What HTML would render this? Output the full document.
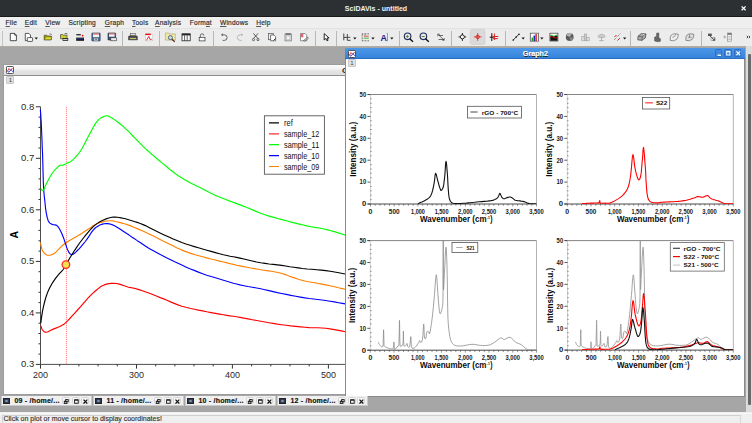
<!DOCTYPE html>
<html><head><meta charset="utf-8">
<style>
*{margin:0;padding:0;box-sizing:border-box}
html,body{width:752px;height:423px;overflow:hidden;background:#efefef;font-family:"Liberation Sans",sans-serif;position:relative}
.a{position:absolute}
#title{left:0;top:0;width:752px;height:17px;background:#2d3033;border-bottom:1px solid #17191b}
#title .t{left:0;width:752px;top:3.6px;text-align:center;color:#f2f2f2;font-weight:bold;font-size:8px;transform:scaleX(0.88);transform-origin:375.9px 0}
#menu{left:0;top:17px;width:752px;height:11px;background:#efefef}
.mi{top:2.2px;font-size:6.6px;color:#2a2a2a;letter-spacing:0.2px;-webkit-text-stroke:0.15px #2a2a2a}
.mi u{text-decoration:underline;text-underline-offset:1.2px;text-decoration-thickness:0.7px;text-decoration-color:#555}
#tb{left:0;top:28px;width:752px;height:18px;background:#ececec;border-top:1px solid #e2e2e2}
.sep{top:2px;width:1px;height:15px;background:#b8b8b8}
#mdi{left:0;top:46px;width:746px;height:366px;background:#a6a6a6;border-top:1px solid #b2aca6}
#sb{left:746px;top:46px;width:6px;height:366px;background:#dcdcdc}
#sbh{left:748px;top:54px;width:2.6px;height:351px;background:#6a6a6a;border-radius:1px}
#lw{left:3.3px;top:63.8px;width:720px;height:331px;background:#fff;border:1px solid #9c9c9c}
#lwt{left:0;top:0;width:100%;height:11.2px;background:linear-gradient(#fbfbfb 0%,#f3f3f3 40%,#e3e3e3 60%,#dfdfdf 100%);border-bottom:1px solid #8e8e8e}
#g2{left:345px;top:48px;width:400px;height:349px;background:#fff;border:1px solid #8a8a8a;border-top:none}
#g2t{left:-1px;top:0;width:400px;height:10.8px;background:linear-gradient(#4d97e8,#3584dc);border-bottom:1px solid #2a6cc0;border-radius:2px 2px 0 0}
.wb{top:1.4px;width:7.6px;height:8px;border:1px solid #2d6cc0;border-radius:1.5px;background:#3f8ae0}
#tabs{left:0;top:395.8px;width:752px;height:10px}
.tab{top:0;height:9.8px;width:91px;background:#f0f0f0;border:1px solid #c9c9c9;border-top:none}
.tab .ic{left:1.3px;top:2px;width:6.8px;height:6px;background:radial-gradient(#9aa 10%,#2c3a55 60%);border:0.5px solid #222}
.tab .tx{left:12.5px;top:1.4px;font-size:7px;font-weight:bold;color:#111;white-space:nowrap;letter-spacing:0.2px;-webkit-text-stroke:0.15px #111}
.tab .bt{top:1.1px;width:7.7px;height:7.4px;border:0.8px solid #d4d4d4;border-radius:1.5px;background:#f8f8f8}
#status{left:0;top:412.5px;width:752px;height:10.5px;background:#efefef;border-top:1px solid #f8f8f8}
#stl{left:1.5px;top:1px;width:739px;height:9.5px;border:1px solid #d0d0d0;border-bottom:none;border-right:1px solid #d8d8d8}
#stl .tx{left:1px;top:-1px;font-size:7px;color:#2e2e2e;white-space:nowrap;letter-spacing:0px;-webkit-text-stroke:0.12px #2e2e2e}
svg text{font-family:"Liberation Sans",sans-serif}
.lt{font-size:9.6px;fill:#2a2a2a}
.ax{font-size:10.5px;font-weight:bold;fill:#000}
.lg1{font-size:8.6px;fill:#111}
.tk{font-size:6.4px;fill:#1a1a1a;font-weight:bold}
.al{font-size:8.2px;font-weight:bold;fill:#0a0a0a}
.lg{font-size:6.2px;font-weight:bold;fill:#111}
</style></head><body>
<div id="title" class="a"><div class="t a">SciDAVis - untitled</div>
<svg class="a" style="left:738px;top:3px" width="12" height="12"><path d="M3.6,3.4 l4,3.9 M7.6,3.4 l-4,3.9" stroke="#fff" stroke-width="1.3"/></svg></div>
<div id="menu" class="a">
<div class="a mi" style="left:5.6px"><u>F</u>ile</div>
<div class="a mi" style="left:24.8px"><u>E</u>dit</div>
<div class="a mi" style="left:45.3px"><u>V</u>iew</div>
<div class="a mi" style="left:68.5px">Scripting</div>
<div class="a mi" style="left:104.8px"><u>G</u>raph</div>
<div class="a mi" style="left:132px"><u>T</u>ools</div>
<div class="a mi" style="left:155.1px"><u>A</u>nalysis</div>
<div class="a mi" style="left:189.8px">Form<u>a</u>t</div>
<div class="a mi" style="left:220px"><u>W</u>indows</div>
<div class="a mi" style="left:256.2px"><u>H</u>elp</div>
</div>
<div id="tb" class="a">
<div class="a" style="left:2.2px;top:1.5px;width:1px;height:16px;background:#c4c4c4"></div>
<div class="a sep" style="left:121.8px"></div>
<div class="a sep" style="left:159.0px"></div>
<div class="a sep" style="left:213.1px"></div>
<div class="a sep" style="left:315.1px"></div>
<div class="a sep" style="left:335.9px"></div>
<div class="a sep" style="left:398.5px"></div>
<div class="a sep" style="left:450.9px"></div>
<div class="a sep" style="left:504.9px"></div>
<div class="a sep" style="left:630.1px"></div>
<div class="a sep" style="left:701.4px"></div><svg class="a" style="left:0;top:-28.6px" width="752" height="46" viewBox="0 0 752 46"><path d="M10.3,33.4 h4.3 l1.8,1.8 v5.5 h-6.1z" fill="#fff" stroke="#222" stroke-width="0.8"/><path d="M14.6,33.4 v1.8 h1.8" fill="none" stroke="#222" stroke-width="0.7"/><path d="M25.3,33.4 h3.6 l1.6,1.6 v5.6 h-5.2z" fill="#fff" stroke="#333" stroke-width="0.8"/><rect x="27.3" y="37.6" width="5.3" height="3.8" fill="#fff" stroke="#333" stroke-width="0.8" rx="0.6"/><path d="M34.6,37.6 h3.3 l-1.65,1.8z" fill="#111"/><path d="M44.2,35.2 h2.5 l0.8,0.8 h3.8 v3.8 h-7.1z" fill="#a8a400" stroke="#333" stroke-width="0.6"/><path d="M44.2,39.8 l1.6,-3 h6.2 l-1.2,3z" fill="#dede20" stroke="#444" stroke-width="0.5"/><path d="M49.5,34 q1.5,-0.6 2.2,0.8" fill="none" stroke="#222" stroke-width="0.6"/><path d="M60.5,34.5 h2.3 l0.7,0.7 h3.5 v3.5 h-6.5z" fill="#cccc30" stroke="#333" stroke-width="0.6"/><rect x="62.6" y="38" width="5.6" height="2.8" fill="#222"/><rect x="63.2" y="38.9" width="4.3" height="1.1" fill="#ccc"/><path d="M64.5,33.8 q1.6,-1 3,0.3" fill="none" stroke="#222" stroke-width="0.6"/><rect x="76.3" y="34" width="4.5" height="1.4" fill="#333"/><circle cx="82.6" cy="35.6" r="0.9" fill="#e00"/><rect x="76.2" y="37.6" width="7.8" height="3.2" fill="#111"/><rect x="76.6" y="38.4" width="7" height="0.8" fill="#3050c0"/><rect x="91.8" y="33" width="8.4" height="7.9" fill="#4c6d96" stroke="#2d3f5a" stroke-width="0.6" rx="0.5"/><rect x="93" y="33.5" width="6" height="3.6" fill="#f4f4f4"/><rect x="93" y="33.5" width="6" height="1" fill="#e05050"/><rect x="94" y="38.3" width="4" height="2.4" fill="#ccc"/><rect x="95.6" y="38.6" width="0.9" height="1.6" fill="#333"/><rect x="108" y="33" width="7.6" height="7" fill="#3c5478" stroke="#222" stroke-width="0.6" rx="0.5"/><rect x="109" y="33.5" width="5.6" height="3.2" fill="#f4f4f4"/><rect x="109" y="33.5" width="5.6" height="0.9" fill="#e05050"/><rect x="110.8" y="37.8" width="5.6" height="3" fill="#eee" stroke="#333" stroke-width="0.6"/><rect x="130.5" y="33.6" width="5" height="2.2" fill="#ddd" stroke="#444" stroke-width="0.5"/><path d="M128.8,36 h8.3 l0.3,3.8 h-8.9z" fill="#555" stroke="#222" stroke-width="0.6"/><rect x="130" y="38" width="6" height="0.8" fill="#e8e060"/><rect x="145.6" y="34.8" width="7.2" height="6" fill="#fff" stroke="#bbb" stroke-width="0.5"/><rect x="145.3" y="33.6" width="5.5" height="1.5" fill="#e01010"/><path d="M146.5,40.3 l2.3,-4 l1.1,3 h2" fill="none" stroke="#e02020" stroke-width="0.9"/><path d="M165.4,33 h3.5 l0.8,0.9 h5.6 v6.2 h-9.9z" fill="#f1e9a2" stroke="#aaa070" stroke-width="0.6"/><circle cx="170.4" cy="37.6" r="2" fill="#cfe0f0" stroke="#2a4a80" stroke-width="0.8"/><path d="M171.9,39.2 l2.8,2.6" stroke="#5a3010" stroke-width="1.2"/><rect x="182" y="33.8" width="8.2" height="7" fill="#fff" stroke="#222" stroke-width="0.8"/><rect x="182" y="33.8" width="8.2" height="1.6" fill="#222"/><path d="M184.6,35.4 v5.4 M187.2,35.4 v5.4" stroke="#222" stroke-width="0.7"/><rect x="199.2" y="37.3" width="5.8" height="3.6" fill="#fff" stroke="#333" stroke-width="0.7"/><path d="M200.4,37.3 v-1.8 a1.7,1.7 0 0 1 3.4,0" fill="none" stroke="#333" stroke-width="0.7"/><path d="M221.6,34.8 l1.3,-1 M221.6,34.8 l1.3,1 M221.8,34.8 h2.5 a2.8,2.8 0 0 1 0,5.6 h-1.6" fill="none" stroke="#444" stroke-width="0.8"/><path d="M242.6,34.8 l-1.3,-1 M242.6,34.8 l-1.3,1 M242.4,34.8 h-2.2 a2.8,2.8 0 0 0 0,5.6 h1.6" fill="none" stroke="#aaa" stroke-width="0.8"/><path d="M253.4,33.4 l4.6,5.2 M258,33.4 l-4.6,5.2" stroke="#333" stroke-width="0.8"/><circle cx="253.5" cy="39.6" r="1.1" fill="none" stroke="#333" stroke-width="0.7"/><circle cx="258" cy="39.6" r="1.1" fill="none" stroke="#333" stroke-width="0.7"/><rect x="268.6" y="33.5" width="4.6" height="6.2" fill="#eee" stroke="#555" stroke-width="0.7"/><path d="M270.6,35 h3.4 l1.6,1.6 v4.2 h-5z" fill="#fff" stroke="#444" stroke-width="0.7"/><path d="M273.5,40.5 l2,-2" stroke="#222" stroke-width="0.9"/><rect x="285" y="34" width="6.4" height="6.9" fill="#ddd" stroke="#777" stroke-width="0.7"/><rect x="285.6" y="33.3" width="5.2" height="1.5" fill="#666"/><rect x="286.5" y="36" width="3.4" height="3.6" fill="#f6f6f6" stroke="#999" stroke-width="0.4"/><path d="M300.5,33.5 h4.6 l1.6,1.6 v5.7 h-6.2z" fill="#fff" stroke="#666" stroke-width="0.7"/><rect x="300.8" y="33.8" width="2.5" height="3.5" fill="#f06070"/><path d="M303.5,40.5 l4.2,-3.2 l0.8,0.8 l-3.6,3z" fill="#eee" stroke="#333" stroke-width="0.6"/><path d="M324.2,33.6 v6.4 l1.6,-1.5 l1.2,2.3 l1.1,-0.5 l-1.1,-2.3 h2.1z" fill="#fff" stroke="#111" stroke-width="0.9"/><path d="M343.8,33.5 v6.8 M343.8,37.4 h3.2 M347.3,34 v6.3 h3.3 M347.3,37.3 h3" fill="none" stroke="#333" stroke-width="0.9"/><path d="M353.2,37.6 h3.3 l-1.65,1.8z" fill="#111"/><path d="M362.2,33.8 v7 M362.2,33.8 h7.4 M362.2,40.8 h7.4" stroke="#333" stroke-width="0.8" stroke-dasharray="0.8,0.7"/><path d="M363.8,36.2 h5" stroke="#e04040" stroke-width="0.9"/><path d="M363.8,38.2 h5" stroke="#30b030" stroke-width="0.9"/><path d="M363.8,35 h2.5" stroke="#777" stroke-width="0.6"/><path d="M371.3,37.6 h3.3 l-1.65,1.8z" fill="#111"/><text x="380.4" y="41" font-size="9.6" font-weight="bold" fill="#1c1c98" font-family="Liberation Sans" textLength="6.4" lengthAdjust="spacingAndGlyphs">A</text><path d="M386.6,33.3 h0.9 v7.6 h-0.9" fill="none" stroke="#666" stroke-width="0.6"/><path d="M390.2,37.6 h3.3 l-1.65,1.8z" fill="#111"/><circle cx="407.6" cy="36.3" r="3.3" fill="#dfe8f4" stroke="#1c2c50" stroke-width="1.1"/><path d="M407.4,35 v3 M405.9,36.5 h3" stroke="#8a6a20" stroke-width="0.9"/><path d="M409.7,38.8 l3.3,3" stroke="#111" stroke-width="1.5"/><circle cx="423.4" cy="36.3" r="3.3" fill="#dfe8f4" stroke="#1c2c50" stroke-width="1.1"/><path d="M421.7,36.5 h3" stroke="#8a6a20" stroke-width="1"/><path d="M425.5,38.8 l3.3,3" stroke="#111" stroke-width="1.5"/><path d="M437.8,34.2 l6.4,6 M437.8,34.2 v2 M437.8,34.2 h2 M444.2,40.2 v-2 M444.2,40.2 h-2 M438.5,39.5 h5 M439,35.5 h4" fill="none" stroke="#333" stroke-width="0.7"/><circle cx="462.4" cy="36.9" r="2" fill="#fff" stroke="#111" stroke-width="0.9"/><path d="M462.4,33 v2 M462.4,38.9 v2 M458.6,36.9 h1.8 M464.4,36.9 h1.8" stroke="#111" stroke-width="0.9"/><rect x="470.2" y="29.4" width="14.8" height="15" rx="1.6" fill="#dadada" stroke="#c6c6c6" stroke-width="0.5"/><circle cx="477.7" cy="36.9" r="1.7" fill="none" stroke="#d02020" stroke-width="0.9"/><path d="M477.7,33 v7.8 M473.8,36.9 h7.8" stroke="#e02020" stroke-width="0.8"/><path d="M491.8,33.2 v7.8 M489.7,37.2 h4" stroke="#111" stroke-width="1"/><path d="M494.4,33.5 v6.5 M492.5,36.5 h5.8 M493,38.6 h4.8" stroke="#e02020" stroke-width="1"/><path d="M513,40.3 l6.2,-6.3" stroke="#222" stroke-width="0.9"/><circle cx="513.3" cy="40" r="0.8" fill="#111"/><circle cx="516.2" cy="37" r="0.8" fill="#111"/><circle cx="519" cy="34.3" r="0.8" fill="#111"/><path d="M521.5,37.6 h3.3 l-1.65,1.8z" fill="#111"/><rect x="530.3" y="33.2" width="8.2" height="8" fill="#fff" stroke="#555" stroke-width="0.8"/><rect x="531.6" y="37.5" width="1.4" height="3.5" fill="#20a020"/><rect x="533.5" y="35.5" width="1.6" height="5.5" fill="#1a28c0"/><rect x="535.4" y="34" width="1.4" height="7" fill="#e01010"/><path d="M540.2,37.6 h3.3 l-1.65,1.8z" fill="#111"/><rect x="549.9" y="33.2" width="8" height="7.8" fill="#fff" stroke="#333" stroke-width="0.7"/><path d="M550.3,35.8 q1.2,-1.2 2.4,0 q1.4,1 2.6,-0.2 q1.2,-1 2.2,0.2 v4.9 h-7.2z" fill="#111"/><path d="M550.3,35.8 q1.2,-1.2 2.4,0 q1.4,1 2.6,-0.2 q1.2,-1 2.2,0.2" fill="none" stroke="#30d030" stroke-width="0.9"/><path d="M550.3,37 q2,-0.8 3.5,0.6 q2,1 3.7,-0.4" fill="none" stroke="#e01010" stroke-width="0.9"/><circle cx="569.7" cy="37" r="3.9" fill="#5a5a5a"/><path d="M569.7,37 l-3.5,-1.8 a3.9,3.9 0 0 1 6,-1.6z" fill="#b0b0b0"/><path d="M569.7,37 l3.8,1 a3.9,3.9 0 0 1 -3,2.9z" fill="#888"/><rect x="581.8" y="36.4" width="2.6" height="4.4" fill="#ddd" stroke="#999" stroke-width="0.5"/><rect x="584.2" y="34" width="2.6" height="6.8" fill="#ccc" stroke="#999" stroke-width="0.5"/><rect x="586.6" y="37.4" width="2.6" height="3.4" fill="#ddd" stroke="#999" stroke-width="0.5"/><path d="M597.8,36 q3.7,-3.5 7.4,0 l-1,1.5 h-5.4z" fill="#ccc" stroke="#999" stroke-width="0.5"/><path d="M601.5,37.5 v3 M599.3,40.6 h4.4" stroke="#999" stroke-width="0.7"/><path d="M614,40 l6.6,-6.5" stroke="#333" stroke-width="0.7" stroke-dasharray="1,1"/><path d="M614.5,37 l2,-2 M617.5,40.5 l2.3,-2.3" stroke="#d02020" stroke-width="1"/><path d="M623,37.6 h3.3 l-1.65,1.8z" fill="#111"/><path d="M638,36.2 l3.2,-2.6 l4.8,0.3 l-0.6,4 l-3.4,2.4 l-4.2,-0.4z" fill="#aaa" stroke="#444" stroke-width="0.7"/><path d="M638,36.2 l4.3,0.6 l3.7,-2.9 M642.3,36.8 l-0.5,3.9" fill="none" stroke="#444" stroke-width="0.6"/><path d="M642.8,34.2 l2,1" stroke="#fff" stroke-width="0.6"/><path d="M654.6,37.2 l2,-1 v-3 l2.2,-0.3 v5.2 l1.6,0.6 v2.6 l-2.4,0.5 l-3.4,-0.8z" fill="#666" stroke="#444" stroke-width="0.5"/><path d="M670.2,38.2 q0,-3.8 4.2,-4.4 l3.8,0.3 l-0.2,2.8 q-0.6,3 -4.2,3.8 l-3.5,-0.3z" fill="#eee" stroke="#555" stroke-width="0.6"/><path d="M672.3,37.3 l2.2,-0.8 l1.3,-2.4" fill="none" stroke="#555" stroke-width="0.5"/><path d="M685.8,38.2 q0,-3.8 4.2,-4.4 l3.8,0.3 l-0.2,2.8 q-0.6,3 -4.2,3.8 l-3.5,-0.3z" fill="#ddd" stroke="#555" stroke-width="0.6"/><path d="M688,37.3 h3.5 M689.5,34.4 v3" fill="none" stroke="#555" stroke-width="0.5"/><rect x="708" y="33.6" width="3.8" height="2.4" fill="#555"/><path d="M709.8,35.8 l4.8,4.5 M714.6,40.3 v-2 M714.6,40.3 h-2" fill="none" stroke="#222" stroke-width="0.8"/><rect x="711" y="37.3" width="4" height="3.3" fill="none" stroke="#777" stroke-width="0.5"/><path d="M723.2,37 h3 M724.7,35.5 v3" stroke="#999" stroke-width="0.7"/><rect x="727.6" y="33" width="4" height="8.2" fill="#f5f5f5" stroke="#888" stroke-width="0.6"/><rect x="727.6" y="33" width="4" height="1.8" fill="#777"/><path d="M727.6,36.3 h4 M727.6,38 h4 M727.6,39.6 h4" stroke="#999" stroke-width="0.5"/><path d="M746.8,35.8 l1.2,1.2 l-1.2,1.2 M748.8,35.8 l1.2,1.2 l-1.2,1.2" fill="none" stroke="#222" stroke-width="0.8"/></svg>
</div>
<div id="mdi" class="a"></div>
<div id="sb" class="a"></div><div id="sbh" class="a"></div>
<div id="lw" class="a"><div id="lwt" class="a"></div>
<div class="a" style="left:2px;top:1.2px;width:8px;height:8px"><svg width="8" height="8" style="position:absolute;left:0;top:0"><rect x="0.5" y="0.5" width="7" height="7" fill="#fff" stroke="#444" stroke-width="0.9" rx="0.8"/><path d="M1.3,5.5 L3,2.5 L4.5,4.5 L6.5,2" fill="none" stroke="#e03030" stroke-width="0.9"/><path d="M1.3,4.8 L3,6.3 L5,3.5 L6.7,5.8" fill="none" stroke="#3040d0" stroke-width="0.9"/></svg></div>
<div class="a" style="left:2.2px;top:11.5px;width:8px;height:8px;border-radius:1px;background:#e0e0e0;border:0.5px solid #c8c8c8;font-size:6px;text-align:center;line-height:7.5px;color:#444">1</div>
<div class="a" style="left:337.6px;top:1.2px;font-size:8px;font-weight:bold;color:#222">G</div>
</div>
<svg class="a" style="left:0;top:0" width="752" height="423" viewBox="0 0 752 423">
<clipPath id="lwclip"><rect x="4.5" y="76" width="341" height="319"/></clipPath>
<g clip-path="url(#lwclip)">
<line x1="40.5" y1="106.8" x2="40.5" y2="364.4" stroke="#3a3a3a" stroke-width="0.9"/>
<line x1="40.5" y1="364.4" x2="350" y2="364.4" stroke="#3a3a3a" stroke-width="0.9"/>
<line x1="35.8" y1="106.8" x2="40.5" y2="106.8" stroke="#333" stroke-width="1"/>
<line x1="38.5" y1="117.1" x2="40.5" y2="117.1" stroke="#333" stroke-width="1"/>
<line x1="38.5" y1="127.4" x2="40.5" y2="127.4" stroke="#333" stroke-width="1"/>
<line x1="38.5" y1="137.7" x2="40.5" y2="137.7" stroke="#333" stroke-width="1"/>
<line x1="38.5" y1="148.0" x2="40.5" y2="148.0" stroke="#333" stroke-width="1"/>
<line x1="35.8" y1="158.3" x2="40.5" y2="158.3" stroke="#333" stroke-width="1"/>
<line x1="38.5" y1="168.6" x2="40.5" y2="168.6" stroke="#333" stroke-width="1"/>
<line x1="38.5" y1="178.9" x2="40.5" y2="178.9" stroke="#333" stroke-width="1"/>
<line x1="38.5" y1="189.2" x2="40.5" y2="189.2" stroke="#333" stroke-width="1"/>
<line x1="38.5" y1="199.5" x2="40.5" y2="199.5" stroke="#333" stroke-width="1"/>
<line x1="35.8" y1="209.8" x2="40.5" y2="209.8" stroke="#333" stroke-width="1"/>
<line x1="38.5" y1="220.1" x2="40.5" y2="220.1" stroke="#333" stroke-width="1"/>
<line x1="38.5" y1="230.4" x2="40.5" y2="230.4" stroke="#333" stroke-width="1"/>
<line x1="38.5" y1="240.8" x2="40.5" y2="240.8" stroke="#333" stroke-width="1"/>
<line x1="38.5" y1="251.1" x2="40.5" y2="251.1" stroke="#333" stroke-width="1"/>
<line x1="35.8" y1="261.4" x2="40.5" y2="261.4" stroke="#333" stroke-width="1"/>
<line x1="38.5" y1="271.7" x2="40.5" y2="271.7" stroke="#333" stroke-width="1"/>
<line x1="38.5" y1="282.0" x2="40.5" y2="282.0" stroke="#333" stroke-width="1"/>
<line x1="38.5" y1="292.3" x2="40.5" y2="292.3" stroke="#333" stroke-width="1"/>
<line x1="38.5" y1="302.6" x2="40.5" y2="302.6" stroke="#333" stroke-width="1"/>
<line x1="35.8" y1="312.9" x2="40.5" y2="312.9" stroke="#333" stroke-width="1"/>
<line x1="38.5" y1="323.2" x2="40.5" y2="323.2" stroke="#333" stroke-width="1"/>
<line x1="38.5" y1="333.5" x2="40.5" y2="333.5" stroke="#333" stroke-width="1"/>
<line x1="38.5" y1="343.8" x2="40.5" y2="343.8" stroke="#333" stroke-width="1"/>
<line x1="38.5" y1="354.1" x2="40.5" y2="354.1" stroke="#333" stroke-width="1"/>
<line x1="35.8" y1="364.4" x2="40.5" y2="364.4" stroke="#333" stroke-width="1"/>
<text x="21" y="109.8" class="lt" textLength="13.2" lengthAdjust="spacingAndGlyphs">0.8</text>
<text x="21" y="161.3" class="lt" textLength="13.2" lengthAdjust="spacingAndGlyphs">0.7</text>
<text x="21" y="212.8" class="lt" textLength="13.2" lengthAdjust="spacingAndGlyphs">0.6</text>
<text x="21" y="264.4" class="lt" textLength="13.2" lengthAdjust="spacingAndGlyphs">0.5</text>
<text x="21" y="315.9" class="lt" textLength="13.2" lengthAdjust="spacingAndGlyphs">0.4</text>
<text x="21" y="367.4" class="lt" textLength="13.2" lengthAdjust="spacingAndGlyphs">0.3</text>
<line x1="40.5" y1="364.4" x2="40.5" y2="368.59999999999997" stroke="#333" stroke-width="1"/>
<line x1="59.7" y1="364.4" x2="59.7" y2="366.4" stroke="#333" stroke-width="1"/>
<line x1="78.9" y1="364.4" x2="78.9" y2="366.4" stroke="#333" stroke-width="1"/>
<line x1="98.1" y1="364.4" x2="98.1" y2="366.4" stroke="#333" stroke-width="1"/>
<line x1="117.3" y1="364.4" x2="117.3" y2="366.4" stroke="#333" stroke-width="1"/>
<line x1="136.5" y1="364.4" x2="136.5" y2="368.59999999999997" stroke="#333" stroke-width="1"/>
<line x1="155.7" y1="364.4" x2="155.7" y2="366.4" stroke="#333" stroke-width="1"/>
<line x1="174.9" y1="364.4" x2="174.9" y2="366.4" stroke="#333" stroke-width="1"/>
<line x1="194.0" y1="364.4" x2="194.0" y2="366.4" stroke="#333" stroke-width="1"/>
<line x1="213.2" y1="364.4" x2="213.2" y2="366.4" stroke="#333" stroke-width="1"/>
<line x1="232.4" y1="364.4" x2="232.4" y2="368.59999999999997" stroke="#333" stroke-width="1"/>
<line x1="251.6" y1="364.4" x2="251.6" y2="366.4" stroke="#333" stroke-width="1"/>
<line x1="270.8" y1="364.4" x2="270.8" y2="366.4" stroke="#333" stroke-width="1"/>
<line x1="290.0" y1="364.4" x2="290.0" y2="366.4" stroke="#333" stroke-width="1"/>
<line x1="309.2" y1="364.4" x2="309.2" y2="366.4" stroke="#333" stroke-width="1"/>
<line x1="328.4" y1="364.4" x2="328.4" y2="368.59999999999997" stroke="#333" stroke-width="1"/>
<line x1="347.6" y1="364.4" x2="347.6" y2="366.4" stroke="#333" stroke-width="1"/>
<line x1="366.8" y1="364.4" x2="366.8" y2="366.4" stroke="#333" stroke-width="1"/>
<text x="33.0" y="377.8" class="lt" textLength="15" lengthAdjust="spacingAndGlyphs">200</text>
<text x="129.0" y="377.8" class="lt" textLength="15" lengthAdjust="spacingAndGlyphs">300</text>
<text x="224.9" y="377.8" class="lt" textLength="15" lengthAdjust="spacingAndGlyphs">400</text>
<text x="320.9" y="377.8" class="lt" textLength="15" lengthAdjust="spacingAndGlyphs">500</text>
<text transform="translate(18,234.6) rotate(-90)" text-anchor="middle" class="ax">A</text>
<line x1="66.4" y1="106.8" x2="66.4" y2="364" stroke="#ff6a6a" stroke-width="1" stroke-dasharray="1,1"/>
<path d="M40.4,242.6 L40.7,243.8 L41.0,245.5 L41.5,247.5 L42.0,249.4 L42.7,250.9 L43.5,252.1 L44.3,253.2 L45.3,254.1 L46.4,254.8 L47.5,255.2 L48.8,255.3 L50.1,255.1 L51.6,254.7 L53.1,254.1 L54.5,253.3 L55.9,252.2 L57.3,250.7 L58.8,249.2 L60.2,247.6 L61.6,246.2 L63.0,245.0 L64.3,244.0 L65.7,243.0 L67.1,242.0 L68.7,241.0 L70.4,239.9 L72.3,238.9 L74.3,237.8 L76.3,236.7 L78.2,235.6 L80.1,234.4 L82.0,233.2 L83.8,232.0 L85.7,230.8 L87.6,229.6 L89.5,228.4 L91.3,227.1 L93.1,225.8 L95.1,224.7 L97.1,223.7 L99.3,222.8 L101.8,222.1 L104.2,221.4 L106.7,221.0 L108.9,220.7 L110.9,220.7 L112.9,220.9 L114.7,221.2 L116.5,221.7 L118.4,222.1 L120.3,222.6 L122.3,223.1 L124.2,223.7 L126.1,224.3 L127.8,224.9 L129.3,225.4 L130.6,225.9 L131.8,226.4 L133.2,227.0 L135.0,227.7 L137.1,228.6 L139.5,229.6 L142.1,230.7 L145.0,232.0 L148.0,233.4 L151.3,235.0 L154.9,236.8 L158.7,238.7 L162.5,240.7 L166.2,242.5 L169.8,244.3 L173.5,246.1 L177.1,247.9 L180.8,249.6 L184.4,251.1 L188.0,252.4 L191.6,253.6 L195.1,254.7 L198.8,255.7 L202.6,256.8 L206.7,257.9 L210.9,259.0 L215.3,260.0 L219.5,261.1 L223.4,262.0 L227.0,262.9 L230.3,263.7 L233.4,264.4 L236.6,265.2 L240.0,265.9 L243.5,266.6 L247.0,267.3 L250.7,268.0 L254.4,268.6 L258.2,269.3 L262.3,270.0 L266.7,270.6 L271.1,271.3 L275.3,272.0 L279.0,272.7 L282.1,273.5 L284.8,274.4 L287.2,275.3 L289.5,276.2 L292.0,277.1 L294.5,277.9 L296.8,278.7 L299.2,279.5 L301.9,280.2 L305.0,281.0 L308.7,281.8 L312.8,282.5 L317.2,283.3 L321.6,284.1 L325.8,284.9 L330.0,285.8 L334.4,286.8 L338.6,287.8 L342.4,288.6 L345.3,289.3 L347.3,289.7 L348.5,290.0 L349.2,290.1 L349.6,290.1 L350.0,290.2" fill="none" stroke="#ff8000" stroke-width="1.15" stroke-linejoin="round"/>
<path d="M40.4,109.5 L40.5,111.9 L40.8,115.1 L41.0,119.1 L41.3,123.6 L41.5,128.4 L41.7,133.8 L42.0,140.0 L42.2,146.5 L42.5,152.9 L42.7,159.0 L42.9,164.9 L43.0,170.7 L43.2,176.4 L43.3,181.6 L43.5,186.0 L43.7,189.5 L43.9,192.1 L44.1,194.3 L44.3,196.5 L44.6,198.9 L44.9,201.8 L45.2,204.8 L45.5,207.8 L45.9,210.6 L46.3,213.1 L46.7,215.2 L47.1,217.1 L47.6,218.7 L48.0,220.2 L48.6,221.4 L49.2,222.4 L49.9,223.1 L50.6,223.6 L51.4,224.0 L52.2,224.4 L53.1,224.7 L54.1,224.8 L55.0,224.9 L56.0,225.1 L56.9,225.6 L57.7,226.3 L58.4,227.2 L59.1,228.3 L59.8,229.5 L60.5,230.8 L61.2,232.2 L61.9,233.8 L62.6,235.5 L63.3,237.2 L64.0,239.1 L64.7,241.2 L65.4,243.5 L66.2,245.8 L66.9,247.9 L67.6,249.7 L68.3,251.1 L68.9,252.4 L69.6,253.4 L70.3,254.1 L71.1,254.5 L71.9,254.6 L72.7,254.5 L73.5,254.0 L74.5,253.2 L75.8,252.1 L77.4,250.5 L79.3,248.6 L81.3,246.3 L83.3,243.9 L85.3,241.5 L87.2,238.9 L89.1,236.1 L90.9,233.2 L92.8,230.6 L94.7,228.5 L96.6,226.9 L98.6,225.7 L100.5,224.8 L102.4,224.1 L104.2,223.7 L105.9,223.5 L107.6,223.6 L109.2,223.9 L110.9,224.3 L112.5,224.9 L114.0,225.5 L115.5,226.3 L117.0,227.2 L118.7,228.3 L120.7,229.6 L123.2,231.2 L126.0,233.1 L129.1,235.1 L132.1,237.2 L135.0,239.1 L137.6,240.9 L140.2,242.6 L142.7,244.3 L145.3,246.0 L148.0,247.7 L150.9,249.4 L153.9,251.1 L157.0,252.8 L160.3,254.6 L163.6,256.3 L167.0,258.1 L170.6,259.8 L174.2,261.6 L178.0,263.3 L181.8,265.1 L185.8,266.9 L189.9,268.7 L194.2,270.4 L198.4,272.1 L202.6,273.7 L206.8,275.2 L211.1,276.5 L215.4,277.8 L219.5,279.0 L223.4,280.2 L226.9,281.3 L230.1,282.2 L233.3,283.2 L236.5,284.0 L240.0,284.9 L243.9,285.7 L248.0,286.5 L252.3,287.2 L256.6,288.0 L260.8,288.8 L264.9,289.7 L269.0,290.6 L273.1,291.6 L277.3,292.6 L281.6,293.5 L286.2,294.4 L290.9,295.4 L295.7,296.3 L300.4,297.1 L305.0,297.9 L309.3,298.5 L313.6,299.0 L317.7,299.5 L321.8,300.0 L325.8,300.5 L330.0,301.2 L334.4,301.9 L338.6,302.7 L342.4,303.4 L345.3,303.9 L347.3,304.3 L348.5,304.5 L349.2,304.6 L349.6,304.7 L350.0,304.8" fill="none" stroke="#0000ff" stroke-width="1.15" stroke-linejoin="round"/>
<path d="M40.8,188.5 L41.1,188.9 L41.6,189.6 L42.1,190.2 L42.6,190.6 L43.2,190.5 L43.7,189.8 L44.3,188.7 L44.8,187.2 L45.5,185.6 L46.3,183.9 L47.3,182.0 L48.4,179.8 L49.6,177.5 L50.9,175.3 L52.2,173.3 L53.6,171.5 L55.1,169.7 L56.7,168.1 L58.1,166.7 L59.3,165.7 L60.2,165.2 L61.0,165.1 L61.6,165.2 L62.2,165.3 L62.8,165.2 L63.5,164.9 L64.1,164.6 L64.8,164.3 L65.5,163.9 L66.4,163.4 L67.4,163.0 L68.5,162.6 L69.7,162.1 L70.9,161.4 L72.3,160.3 L73.8,158.9 L75.5,157.1 L77.3,155.2 L79.0,153.0 L80.6,150.8 L82.0,148.5 L83.4,146.0 L84.7,143.4 L86.1,140.7 L87.6,137.8 L89.4,134.5 L91.3,130.9 L93.3,127.3 L95.2,123.9 L97.1,121.3 L98.9,119.4 L100.7,118.1 L102.4,117.1 L104.0,116.5 L105.4,116.0 L106.5,115.7 L107.4,115.7 L108.1,116.0 L109.0,116.4 L110.1,117.0 L111.5,117.8 L113.1,118.7 L114.8,119.9 L116.6,121.2 L118.4,122.5 L120.2,124.0 L122.2,125.6 L124.1,127.3 L126.0,129.1 L127.8,130.7 L129.3,132.2 L130.7,133.6 L132.0,135.0 L133.4,136.5 L135.0,138.2 L136.9,140.1 L138.9,142.2 L141.1,144.4 L143.3,146.6 L145.4,148.6 L147.5,150.5 L149.6,152.4 L151.6,154.2 L153.7,155.9 L155.8,157.7 L157.9,159.5 L160.0,161.2 L162.0,162.9 L164.1,164.6 L166.2,166.3 L168.2,168.0 L170.2,169.7 L172.3,171.3 L174.4,173.0 L176.6,174.6 L179.0,176.2 L181.6,177.8 L184.3,179.4 L187.0,180.9 L189.6,182.4 L192.2,183.8 L194.8,185.1 L197.4,186.4 L200.0,187.6 L202.6,188.9 L205.2,190.2 L207.8,191.6 L210.4,192.9 L213.0,194.2 L215.6,195.4 L218.1,196.5 L220.6,197.5 L223.2,198.5 L225.8,199.5 L228.6,200.6 L231.6,201.7 L234.7,202.9 L238.0,204.1 L241.4,205.4 L245.0,206.8 L248.7,208.3 L252.6,209.9 L256.6,211.6 L260.7,213.2 L264.9,214.7 L269.2,216.1 L273.8,217.4 L278.3,218.7 L282.9,219.9 L287.2,221.0 L291.3,222.1 L295.3,223.1 L299.2,224.1 L303.1,225.0 L307.0,225.9 L311.0,226.7 L315.0,227.4 L319.0,228.0 L323.0,228.8 L326.9,229.6 L330.9,230.7 L335.1,231.9 L339.1,233.1 L342.7,234.2 L345.5,235.1 L347.4,235.7 L348.5,236.0 L349.2,236.2 L349.6,236.4 L350.0,236.5" fill="none" stroke="#00ff00" stroke-width="1.15" stroke-linejoin="round"/>
<path d="M40.8,325.6 L41.0,326.3 L41.3,327.3 L41.7,328.4 L42.2,329.5 L42.7,330.3 L43.3,330.9 L43.9,331.5 L44.6,331.9 L45.4,332.2 L46.3,332.2 L47.3,332.0 L48.3,331.6 L49.5,331.0 L50.8,330.3 L52.2,329.6 L53.9,328.9 L55.9,328.1 L57.9,327.3 L59.9,326.5 L61.6,325.6 L62.9,324.8 L63.9,324.2 L64.9,323.4 L66.0,322.4 L67.6,320.8 L69.8,318.5 L72.4,315.7 L75.2,312.6 L78.0,309.5 L80.6,306.6 L83.0,303.9 L85.4,301.1 L87.7,298.4 L90.1,295.9 L92.4,293.6 L94.8,291.5 L97.1,289.5 L99.5,287.6 L101.8,286.1 L104.2,284.9 L106.6,284.1 L108.9,283.6 L111.3,283.4 L113.6,283.3 L116.0,283.5 L118.4,283.9 L120.9,284.6 L123.4,285.5 L125.7,286.3 L127.8,287.0 L129.4,287.4 L130.7,287.6 L131.9,287.8 L133.3,288.1 L135.0,288.5 L137.2,289.1 L139.7,289.9 L142.3,290.7 L145.1,291.7 L148.0,292.7 L150.9,293.8 L153.9,295.0 L157.0,296.2 L160.3,297.6 L163.6,298.9 L167.0,300.3 L170.6,301.9 L174.2,303.4 L178.0,304.9 L181.8,306.2 L185.8,307.3 L189.9,308.3 L194.2,309.2 L198.4,310.1 L202.6,310.9 L206.8,311.8 L211.1,312.6 L215.4,313.4 L219.5,314.1 L223.4,314.8 L226.9,315.4 L230.1,315.9 L233.3,316.3 L236.5,316.8 L240.0,317.4 L243.9,318.1 L248.0,318.9 L252.3,319.7 L256.6,320.5 L260.8,321.3 L264.9,322.0 L269.0,322.7 L273.1,323.4 L277.3,324.1 L281.6,324.7 L286.2,325.3 L290.9,325.9 L295.7,326.4 L300.4,326.9 L305.0,327.3 L309.3,327.6 L313.6,327.7 L317.7,327.8 L321.8,328.0 L325.8,328.3 L330.0,328.9 L334.4,329.6 L338.6,330.4 L342.4,331.1 L345.3,331.7 L347.3,332.0 L348.5,332.2 L349.2,332.4 L349.6,332.4 L350.0,332.5" fill="none" stroke="#ff0000" stroke-width="1.15" stroke-linejoin="round"/>
<path d="M40.8,323.2 L41.0,321.5 L41.3,319.0 L41.7,316.1 L42.2,313.1 L42.7,310.2 L43.3,307.4 L44.0,304.4 L44.7,301.5 L45.5,298.6 L46.3,296.0 L47.2,293.6 L48.0,291.4 L49.0,289.3 L50.0,287.3 L51.0,285.4 L52.1,283.5 L53.3,281.6 L54.5,279.9 L55.7,278.2 L56.9,276.6 L58.1,275.1 L59.4,273.7 L60.6,272.4 L61.8,271.2 L62.8,270.0 L63.5,269.0 L63.9,268.3 L64.3,267.5 L64.9,266.3 L65.9,264.6 L67.5,262.0 L69.4,258.8 L71.5,255.3 L73.7,251.8 L75.8,248.6 L77.7,245.8 L79.6,243.0 L81.5,240.5 L83.4,238.0 L85.3,235.6 L87.2,233.3 L89.1,231.1 L90.9,229.0 L92.8,227.1 L94.7,225.4 L96.6,223.9 L98.5,222.6 L100.4,221.5 L102.3,220.6 L104.2,219.7 L106.1,218.9 L108.0,218.3 L109.8,217.7 L111.7,217.3 L113.6,217.1 L115.5,217.1 L117.3,217.2 L119.1,217.5 L121.0,217.9 L123.1,218.3 L125.4,218.8 L127.8,219.5 L130.2,220.2 L132.7,221.0 L135.0,221.7 L137.1,222.4 L139.0,223.0 L140.9,223.7 L143.0,224.6 L145.4,225.6 L148.1,226.9 L151.0,228.4 L154.1,230.0 L157.5,231.7 L161.0,233.4 L164.8,235.2 L168.9,237.1 L173.2,239.0 L177.6,240.8 L181.8,242.5 L186.0,244.0 L190.1,245.3 L194.3,246.6 L198.4,247.8 L202.6,249.0 L206.8,250.2 L211.1,251.4 L215.4,252.6 L219.5,253.7 L223.4,254.7 L226.9,255.5 L230.1,256.2 L233.3,256.8 L236.5,257.4 L240.0,258.1 L243.9,259.0 L248.0,260.0 L252.3,261.0 L256.6,262.0 L260.8,262.8 L265.0,263.4 L269.1,264.0 L273.3,264.4 L277.4,264.9 L281.6,265.4 L285.7,266.0 L289.8,266.7 L293.9,267.3 L298.1,267.9 L302.4,268.5 L307.0,269.0 L311.8,269.3 L316.6,269.7 L321.3,270.1 L325.8,270.6 L330.2,271.2 L334.6,272.0 L338.8,272.8 L342.4,273.5 L345.3,274.0 L347.3,274.4 L348.5,274.6 L349.2,274.8 L349.6,274.9 L350.0,275.0" fill="none" stroke="#000" stroke-width="1.15" stroke-linejoin="round"/>
<circle cx="65.9" cy="264.6" r="3.8" fill="#f0e450" stroke="#ff2a20" stroke-width="1.3"/>
<rect x="264.4" y="115.8" width="60" height="58.4" fill="#fff" stroke="#555" stroke-width="0.9"/>
<line x1="269" y1="122.9" x2="279" y2="122.9" stroke="#000" stroke-width="1.2"/>
<text x="284" y="126.1" class="lg1" textLength="8.7" lengthAdjust="spacingAndGlyphs">ref</text>
<line x1="269" y1="133.8" x2="279" y2="133.8" stroke="#ff3030" stroke-width="1.2"/>
<text x="284" y="137.0" class="lg1" textLength="35.2" lengthAdjust="spacingAndGlyphs">sample_12</text>
<line x1="269" y1="144.7" x2="279" y2="144.7" stroke="#00ff00" stroke-width="1.2"/>
<text x="284" y="147.9" class="lg1" textLength="35.2" lengthAdjust="spacingAndGlyphs">sample_11</text>
<line x1="269" y1="155.6" x2="279" y2="155.6" stroke="#0000ff" stroke-width="1.2"/>
<text x="284" y="158.8" class="lg1" textLength="35.2" lengthAdjust="spacingAndGlyphs">sample_10</text>
<line x1="269" y1="166.5" x2="279" y2="166.5" stroke="#ff8000" stroke-width="1.2"/>
<text x="284" y="169.7" class="lg1" textLength="35.2" lengthAdjust="spacingAndGlyphs">sample_09</text>
</g>
</svg>
<div id="g2" class="a"><div id="g2t" class="a">
<div class="a" style="left:3px;top:1.6px;width:8px;height:8px"><svg width="8" height="8" style="position:absolute;left:0;top:0"><rect x="0.5" y="0.5" width="7" height="7" fill="#fff" stroke="#444" stroke-width="0.9" rx="0.8"/><path d="M1.3,5.5 L3,2.5 L4.5,4.5 L6.5,2" fill="none" stroke="#e03030" stroke-width="0.9"/><path d="M1.3,4.8 L3,6.3 L5,3.5 L6.7,5.8" fill="none" stroke="#3040d0" stroke-width="0.9"/></svg></div>
<div class="a" style="left:177.8px;top:1.1px;font-size:7.2px;font-weight:bold;color:#fff;-webkit-text-stroke:0.2px #fff;text-shadow:0.4px 0.5px 0.6px #1a1a1a">Graph2</div>
<div class="a wb" style="left:369.5px"><svg width="8" height="8" style="position:absolute;left:0;top:0"><rect x="1.6" y="4.6" width="3.6" height="1.3" fill="#fff"/></svg></div>
<div class="a wb" style="left:379px"><svg width="8" height="8" style="position:absolute;left:0;top:0"><rect x="1.7" y="1.4" width="3.2" height="3.6" fill="none" stroke="#fff" stroke-width="0.9"/><rect x="1.7" y="1.2" width="3.2" height="1.1" fill="#fff"/></svg></div>
<div class="a wb" style="left:388.5px"><svg width="8" height="8" style="position:absolute;left:0;top:0"><path d="M1.4,1.3 l3.8,3.8 M5.2,1.3 l-3.8,3.8" stroke="#fff" stroke-width="1.1"/></svg></div>
</div>
<div class="a" style="left:1.8px;top:11.3px;width:8px;height:8px;border-radius:1px;background:#e0e0e0;border:0.5px solid #c8c8c8;font-size:6px;text-align:center;line-height:7.5px;color:#444">1</div>
</div>
<svg class="a" style="left:0;top:0" width="752" height="423" viewBox="0 0 752 423">
<line x1="367.5" y1="94.5" x2="536.5" y2="94.5" stroke="#777" stroke-width="0.9"/>
<line x1="536.5" y1="94.5" x2="536.5" y2="204.0" stroke="#aaa" stroke-width="0.9"/>
<line x1="370.5" y1="94.5" x2="370.5" y2="204.0" stroke="#ccc" stroke-width="0.9"/>
<line x1="367.5" y1="204.0" x2="370.5" y2="204.0" stroke="#333" stroke-width="0.8"/>
<line x1="370.3" y1="199.6" x2="371.7" y2="199.6" stroke="#444" stroke-width="0.6"/>
<line x1="370.3" y1="195.2" x2="371.7" y2="195.2" stroke="#444" stroke-width="0.6"/>
<line x1="370.3" y1="190.9" x2="371.7" y2="190.9" stroke="#444" stroke-width="0.6"/>
<line x1="370.3" y1="186.5" x2="371.7" y2="186.5" stroke="#444" stroke-width="0.6"/>
<line x1="367.5" y1="182.1" x2="370.5" y2="182.1" stroke="#333" stroke-width="0.8"/>
<line x1="370.3" y1="177.7" x2="371.7" y2="177.7" stroke="#444" stroke-width="0.6"/>
<line x1="370.3" y1="173.3" x2="371.7" y2="173.3" stroke="#444" stroke-width="0.6"/>
<line x1="370.3" y1="169.0" x2="371.7" y2="169.0" stroke="#444" stroke-width="0.6"/>
<line x1="370.3" y1="164.6" x2="371.7" y2="164.6" stroke="#444" stroke-width="0.6"/>
<line x1="367.5" y1="160.2" x2="370.5" y2="160.2" stroke="#333" stroke-width="0.8"/>
<line x1="370.3" y1="155.8" x2="371.7" y2="155.8" stroke="#444" stroke-width="0.6"/>
<line x1="370.3" y1="151.4" x2="371.7" y2="151.4" stroke="#444" stroke-width="0.6"/>
<line x1="370.3" y1="147.1" x2="371.7" y2="147.1" stroke="#444" stroke-width="0.6"/>
<line x1="370.3" y1="142.7" x2="371.7" y2="142.7" stroke="#444" stroke-width="0.6"/>
<line x1="367.5" y1="138.3" x2="370.5" y2="138.3" stroke="#333" stroke-width="0.8"/>
<line x1="370.3" y1="133.9" x2="371.7" y2="133.9" stroke="#444" stroke-width="0.6"/>
<line x1="370.3" y1="129.5" x2="371.7" y2="129.5" stroke="#444" stroke-width="0.6"/>
<line x1="370.3" y1="125.2" x2="371.7" y2="125.2" stroke="#444" stroke-width="0.6"/>
<line x1="370.3" y1="120.8" x2="371.7" y2="120.8" stroke="#444" stroke-width="0.6"/>
<line x1="367.5" y1="116.4" x2="370.5" y2="116.4" stroke="#333" stroke-width="0.8"/>
<line x1="370.3" y1="112.0" x2="371.7" y2="112.0" stroke="#444" stroke-width="0.6"/>
<line x1="370.3" y1="107.6" x2="371.7" y2="107.6" stroke="#444" stroke-width="0.6"/>
<line x1="370.3" y1="103.3" x2="371.7" y2="103.3" stroke="#444" stroke-width="0.6"/>
<line x1="370.3" y1="98.9" x2="371.7" y2="98.9" stroke="#444" stroke-width="0.6"/>
<line x1="367.5" y1="94.5" x2="370.5" y2="94.5" stroke="#333" stroke-width="0.8"/>
<line x1="370.5" y1="204.0" x2="370.5" y2="206.5" stroke="#555" stroke-width="0.6"/>
<line x1="375.2" y1="204.0" x2="375.2" y2="205.8" stroke="#555" stroke-width="0.6"/>
<line x1="380.0" y1="204.0" x2="380.0" y2="205.8" stroke="#555" stroke-width="0.6"/>
<line x1="384.7" y1="204.0" x2="384.7" y2="205.8" stroke="#555" stroke-width="0.6"/>
<line x1="389.5" y1="204.0" x2="389.5" y2="205.8" stroke="#555" stroke-width="0.6"/>
<line x1="394.2" y1="204.0" x2="394.2" y2="206.5" stroke="#555" stroke-width="0.6"/>
<line x1="399.0" y1="204.0" x2="399.0" y2="205.8" stroke="#555" stroke-width="0.6"/>
<line x1="403.7" y1="204.0" x2="403.7" y2="205.8" stroke="#555" stroke-width="0.6"/>
<line x1="408.4" y1="204.0" x2="408.4" y2="205.8" stroke="#555" stroke-width="0.6"/>
<line x1="413.2" y1="204.0" x2="413.2" y2="205.8" stroke="#555" stroke-width="0.6"/>
<line x1="417.9" y1="204.0" x2="417.9" y2="206.5" stroke="#555" stroke-width="0.6"/>
<line x1="422.7" y1="204.0" x2="422.7" y2="205.8" stroke="#555" stroke-width="0.6"/>
<line x1="427.4" y1="204.0" x2="427.4" y2="205.8" stroke="#555" stroke-width="0.6"/>
<line x1="432.2" y1="204.0" x2="432.2" y2="205.8" stroke="#555" stroke-width="0.6"/>
<line x1="436.9" y1="204.0" x2="436.9" y2="205.8" stroke="#555" stroke-width="0.6"/>
<line x1="441.6" y1="204.0" x2="441.6" y2="206.5" stroke="#555" stroke-width="0.6"/>
<line x1="446.4" y1="204.0" x2="446.4" y2="205.8" stroke="#555" stroke-width="0.6"/>
<line x1="451.1" y1="204.0" x2="451.1" y2="205.8" stroke="#555" stroke-width="0.6"/>
<line x1="455.9" y1="204.0" x2="455.9" y2="205.8" stroke="#555" stroke-width="0.6"/>
<line x1="460.6" y1="204.0" x2="460.6" y2="205.8" stroke="#555" stroke-width="0.6"/>
<line x1="465.4" y1="204.0" x2="465.4" y2="206.5" stroke="#555" stroke-width="0.6"/>
<line x1="470.1" y1="204.0" x2="470.1" y2="205.8" stroke="#555" stroke-width="0.6"/>
<line x1="474.8" y1="204.0" x2="474.8" y2="205.8" stroke="#555" stroke-width="0.6"/>
<line x1="479.6" y1="204.0" x2="479.6" y2="205.8" stroke="#555" stroke-width="0.6"/>
<line x1="484.3" y1="204.0" x2="484.3" y2="205.8" stroke="#555" stroke-width="0.6"/>
<line x1="489.1" y1="204.0" x2="489.1" y2="206.5" stroke="#555" stroke-width="0.6"/>
<line x1="493.8" y1="204.0" x2="493.8" y2="205.8" stroke="#555" stroke-width="0.6"/>
<line x1="498.6" y1="204.0" x2="498.6" y2="205.8" stroke="#555" stroke-width="0.6"/>
<line x1="503.3" y1="204.0" x2="503.3" y2="205.8" stroke="#555" stroke-width="0.6"/>
<line x1="508.0" y1="204.0" x2="508.0" y2="205.8" stroke="#555" stroke-width="0.6"/>
<line x1="512.8" y1="204.0" x2="512.8" y2="206.5" stroke="#555" stroke-width="0.6"/>
<line x1="517.5" y1="204.0" x2="517.5" y2="205.8" stroke="#555" stroke-width="0.6"/>
<line x1="522.3" y1="204.0" x2="522.3" y2="205.8" stroke="#555" stroke-width="0.6"/>
<line x1="527.0" y1="204.0" x2="527.0" y2="205.8" stroke="#555" stroke-width="0.6"/>
<line x1="531.8" y1="204.0" x2="531.8" y2="205.8" stroke="#555" stroke-width="0.6"/>
<line x1="536.5" y1="204.0" x2="536.5" y2="206.5" stroke="#555" stroke-width="0.6"/>
<line x1="367.5" y1="204.0" x2="536.5" y2="204.0" stroke="#333" stroke-width="0.9"/>
<text x="361.9" y="206.3" class="tk" textLength="4.3" lengthAdjust="spacingAndGlyphs">0</text>
<text x="359.6" y="184.4" class="tk" textLength="6.6" lengthAdjust="spacingAndGlyphs">10</text>
<text x="359.6" y="162.5" class="tk" textLength="6.6" lengthAdjust="spacingAndGlyphs">20</text>
<text x="359.6" y="140.6" class="tk" textLength="6.6" lengthAdjust="spacingAndGlyphs">30</text>
<text x="359.6" y="118.7" class="tk" textLength="6.6" lengthAdjust="spacingAndGlyphs">40</text>
<text x="359.6" y="96.8" class="tk" textLength="6.6" lengthAdjust="spacingAndGlyphs">50</text>
<text x="368.6" y="213.7" class="tk" textLength="3.9" lengthAdjust="spacingAndGlyphs">0</text>
<text x="388.8" y="213.7" class="tk" textLength="10.8" lengthAdjust="spacingAndGlyphs">500</text>
<text x="411.1" y="213.7" class="tk" textLength="13.7" lengthAdjust="spacingAndGlyphs">1,000</text>
<text x="434.7" y="213.7" class="tk" textLength="13.8" lengthAdjust="spacingAndGlyphs">1,500</text>
<text x="458.1" y="213.7" class="tk" textLength="14.5" lengthAdjust="spacingAndGlyphs">2,000</text>
<text x="481.8" y="213.7" class="tk" textLength="14.5" lengthAdjust="spacingAndGlyphs">2,500</text>
<text x="505.5" y="213.7" class="tk" textLength="14.5" lengthAdjust="spacingAndGlyphs">3,000</text>
<text x="529.2" y="213.7" class="tk" textLength="14.5" lengthAdjust="spacingAndGlyphs">3,500</text>
<text x="420.1" y="221.8" class="al" textLength="66.5" lengthAdjust="spacingAndGlyphs">Wavenumber (cm</text>
<text x="486.9" y="218.6" class="al" style="font-size:3.4px">-1</text>
<text x="490.3" y="221.8" class="al" textLength="2.3" lengthAdjust="spacingAndGlyphs">)</text>
<text transform="translate(355.5,176.8) rotate(-90)" class="al" textLength="55" lengthAdjust="spacingAndGlyphs">Intensity (a.u.)</text>
<clipPath id="cp1"><rect x="370.5" y="94.5" width="166.0" height="109.5"/></clipPath>
<g clip-path="url(#cp1)">
<path d="M417.9,203.6 L418.9,203.2 L420.3,202.6 L422.0,201.9 L423.5,201.2 L425.0,200.4 L426.5,199.6 L427.9,198.7 L429.2,197.6 L430.1,196.6 L430.8,195.5 L431.4,194.2 L432.0,192.6 L432.6,190.5 L433.2,188.0 L433.7,185.3 L434.2,182.8 L434.6,180.0 L434.9,177.0 L435.2,174.5 L435.6,173.3 L436.1,174.0 L436.6,175.9 L437.2,178.4 L437.7,180.6 L438.3,182.5 L438.8,184.6 L439.4,186.5 L439.9,188.0 L440.3,189.1 L440.6,189.9 L440.9,190.4 L441.3,190.4 L441.8,190.0 L442.3,189.3 L442.9,188.1 L443.4,186.5 L443.8,184.3 L444.1,181.6 L444.5,178.7 L444.8,175.5 L445.1,171.6 L445.4,166.9 L445.7,163.0 L446.0,161.3 L446.3,162.4 L446.7,165.4 L447.0,169.6 L447.4,174.0 L447.7,179.1 L448.0,185.1 L448.4,190.9 L448.8,195.5 L449.3,198.3 L449.8,200.1 L450.4,201.3 L451.2,202.2 L452.2,203.0 L453.4,203.3 L454.8,203.5 L456.2,203.6 L457.8,203.6 L459.5,203.6 L461.2,203.5 L463.0,203.3 L464.7,203.2 L466.4,203.1 L468.2,202.9 L470.1,202.7 L472.2,202.5 L474.4,202.3 L476.7,202.0 L479.1,201.8 L481.6,201.6 L484.3,201.4 L486.9,201.2 L489.1,200.9 L490.8,200.7 L492.3,200.4 L493.6,200.1 L494.8,199.6 L495.8,199.1 L496.7,198.5 L497.4,197.8 L498.1,197.0 L498.6,196.0 L499.1,194.7 L499.5,193.7 L499.9,193.3 L500.4,193.8 L500.8,195.0 L501.4,196.4 L501.9,197.4 L502.4,198.0 L503.0,198.4 L503.6,198.7 L504.2,198.7 L504.9,198.6 L505.6,198.3 L506.3,197.9 L507.1,197.6 L507.9,197.4 L508.7,197.2 L509.6,197.0 L510.3,197.0 L511.0,197.2 L511.6,197.5 L512.2,197.9 L512.8,198.3 L513.4,198.8 L514.0,199.3 L514.6,199.9 L515.4,200.3 L516.4,200.5 L517.5,200.7 L518.8,200.8 L519.9,200.9 L521.0,201.1 L522.1,201.2 L523.1,201.4 L524.1,201.6 L524.9,201.9 L525.7,202.2 L526.4,202.6 L527.0,202.9 L527.5,203.1 L527.9,203.3 L528.4,203.4 L529.3,203.6 L530.9,203.7 L533.0,203.7 L535.1,203.8 L536.5,203.8" fill="none" stroke="#111" stroke-width="1.1" stroke-linejoin="round"/>
</g>
<rect x="467.5" y="106.3" width="54" height="11.7" fill="#fff" stroke="#555" stroke-width="0.8"/>
<line x1="470.4" y1="112" x2="477.6" y2="112" stroke="#666" stroke-width="1.2"/>
<text x="481.8" y="114.7" class="lg" textLength="36.5" lengthAdjust="spacingAndGlyphs">rGO - 700°C</text>
<line x1="564.3" y1="94.5" x2="733.3" y2="94.5" stroke="#777" stroke-width="0.9"/>
<line x1="733.3" y1="94.5" x2="733.3" y2="204.0" stroke="#aaa" stroke-width="0.9"/>
<line x1="567.3" y1="94.5" x2="567.3" y2="204.0" stroke="#ccc" stroke-width="0.9"/>
<line x1="564.3" y1="204.0" x2="567.3" y2="204.0" stroke="#333" stroke-width="0.8"/>
<line x1="567.0999999999999" y1="199.6" x2="568.5" y2="199.6" stroke="#444" stroke-width="0.6"/>
<line x1="567.0999999999999" y1="195.2" x2="568.5" y2="195.2" stroke="#444" stroke-width="0.6"/>
<line x1="567.0999999999999" y1="190.9" x2="568.5" y2="190.9" stroke="#444" stroke-width="0.6"/>
<line x1="567.0999999999999" y1="186.5" x2="568.5" y2="186.5" stroke="#444" stroke-width="0.6"/>
<line x1="564.3" y1="182.1" x2="567.3" y2="182.1" stroke="#333" stroke-width="0.8"/>
<line x1="567.0999999999999" y1="177.7" x2="568.5" y2="177.7" stroke="#444" stroke-width="0.6"/>
<line x1="567.0999999999999" y1="173.3" x2="568.5" y2="173.3" stroke="#444" stroke-width="0.6"/>
<line x1="567.0999999999999" y1="169.0" x2="568.5" y2="169.0" stroke="#444" stroke-width="0.6"/>
<line x1="567.0999999999999" y1="164.6" x2="568.5" y2="164.6" stroke="#444" stroke-width="0.6"/>
<line x1="564.3" y1="160.2" x2="567.3" y2="160.2" stroke="#333" stroke-width="0.8"/>
<line x1="567.0999999999999" y1="155.8" x2="568.5" y2="155.8" stroke="#444" stroke-width="0.6"/>
<line x1="567.0999999999999" y1="151.4" x2="568.5" y2="151.4" stroke="#444" stroke-width="0.6"/>
<line x1="567.0999999999999" y1="147.1" x2="568.5" y2="147.1" stroke="#444" stroke-width="0.6"/>
<line x1="567.0999999999999" y1="142.7" x2="568.5" y2="142.7" stroke="#444" stroke-width="0.6"/>
<line x1="564.3" y1="138.3" x2="567.3" y2="138.3" stroke="#333" stroke-width="0.8"/>
<line x1="567.0999999999999" y1="133.9" x2="568.5" y2="133.9" stroke="#444" stroke-width="0.6"/>
<line x1="567.0999999999999" y1="129.5" x2="568.5" y2="129.5" stroke="#444" stroke-width="0.6"/>
<line x1="567.0999999999999" y1="125.2" x2="568.5" y2="125.2" stroke="#444" stroke-width="0.6"/>
<line x1="567.0999999999999" y1="120.8" x2="568.5" y2="120.8" stroke="#444" stroke-width="0.6"/>
<line x1="564.3" y1="116.4" x2="567.3" y2="116.4" stroke="#333" stroke-width="0.8"/>
<line x1="567.0999999999999" y1="112.0" x2="568.5" y2="112.0" stroke="#444" stroke-width="0.6"/>
<line x1="567.0999999999999" y1="107.6" x2="568.5" y2="107.6" stroke="#444" stroke-width="0.6"/>
<line x1="567.0999999999999" y1="103.3" x2="568.5" y2="103.3" stroke="#444" stroke-width="0.6"/>
<line x1="567.0999999999999" y1="98.9" x2="568.5" y2="98.9" stroke="#444" stroke-width="0.6"/>
<line x1="564.3" y1="94.5" x2="567.3" y2="94.5" stroke="#333" stroke-width="0.8"/>
<line x1="567.3" y1="204.0" x2="567.3" y2="206.5" stroke="#555" stroke-width="0.6"/>
<line x1="572.0" y1="204.0" x2="572.0" y2="205.8" stroke="#555" stroke-width="0.6"/>
<line x1="576.8" y1="204.0" x2="576.8" y2="205.8" stroke="#555" stroke-width="0.6"/>
<line x1="581.5" y1="204.0" x2="581.5" y2="205.8" stroke="#555" stroke-width="0.6"/>
<line x1="586.3" y1="204.0" x2="586.3" y2="205.8" stroke="#555" stroke-width="0.6"/>
<line x1="591.0" y1="204.0" x2="591.0" y2="206.5" stroke="#555" stroke-width="0.6"/>
<line x1="595.8" y1="204.0" x2="595.8" y2="205.8" stroke="#555" stroke-width="0.6"/>
<line x1="600.5" y1="204.0" x2="600.5" y2="205.8" stroke="#555" stroke-width="0.6"/>
<line x1="605.2" y1="204.0" x2="605.2" y2="205.8" stroke="#555" stroke-width="0.6"/>
<line x1="610.0" y1="204.0" x2="610.0" y2="205.8" stroke="#555" stroke-width="0.6"/>
<line x1="614.7" y1="204.0" x2="614.7" y2="206.5" stroke="#555" stroke-width="0.6"/>
<line x1="619.5" y1="204.0" x2="619.5" y2="205.8" stroke="#555" stroke-width="0.6"/>
<line x1="624.2" y1="204.0" x2="624.2" y2="205.8" stroke="#555" stroke-width="0.6"/>
<line x1="629.0" y1="204.0" x2="629.0" y2="205.8" stroke="#555" stroke-width="0.6"/>
<line x1="633.7" y1="204.0" x2="633.7" y2="205.8" stroke="#555" stroke-width="0.6"/>
<line x1="638.4" y1="204.0" x2="638.4" y2="206.5" stroke="#555" stroke-width="0.6"/>
<line x1="643.2" y1="204.0" x2="643.2" y2="205.8" stroke="#555" stroke-width="0.6"/>
<line x1="647.9" y1="204.0" x2="647.9" y2="205.8" stroke="#555" stroke-width="0.6"/>
<line x1="652.7" y1="204.0" x2="652.7" y2="205.8" stroke="#555" stroke-width="0.6"/>
<line x1="657.4" y1="204.0" x2="657.4" y2="205.8" stroke="#555" stroke-width="0.6"/>
<line x1="662.2" y1="204.0" x2="662.2" y2="206.5" stroke="#555" stroke-width="0.6"/>
<line x1="666.9" y1="204.0" x2="666.9" y2="205.8" stroke="#555" stroke-width="0.6"/>
<line x1="671.6" y1="204.0" x2="671.6" y2="205.8" stroke="#555" stroke-width="0.6"/>
<line x1="676.4" y1="204.0" x2="676.4" y2="205.8" stroke="#555" stroke-width="0.6"/>
<line x1="681.1" y1="204.0" x2="681.1" y2="205.8" stroke="#555" stroke-width="0.6"/>
<line x1="685.9" y1="204.0" x2="685.9" y2="206.5" stroke="#555" stroke-width="0.6"/>
<line x1="690.6" y1="204.0" x2="690.6" y2="205.8" stroke="#555" stroke-width="0.6"/>
<line x1="695.4" y1="204.0" x2="695.4" y2="205.8" stroke="#555" stroke-width="0.6"/>
<line x1="700.1" y1="204.0" x2="700.1" y2="205.8" stroke="#555" stroke-width="0.6"/>
<line x1="704.8" y1="204.0" x2="704.8" y2="205.8" stroke="#555" stroke-width="0.6"/>
<line x1="709.6" y1="204.0" x2="709.6" y2="206.5" stroke="#555" stroke-width="0.6"/>
<line x1="714.3" y1="204.0" x2="714.3" y2="205.8" stroke="#555" stroke-width="0.6"/>
<line x1="719.1" y1="204.0" x2="719.1" y2="205.8" stroke="#555" stroke-width="0.6"/>
<line x1="723.8" y1="204.0" x2="723.8" y2="205.8" stroke="#555" stroke-width="0.6"/>
<line x1="728.6" y1="204.0" x2="728.6" y2="205.8" stroke="#555" stroke-width="0.6"/>
<line x1="733.3" y1="204.0" x2="733.3" y2="206.5" stroke="#555" stroke-width="0.6"/>
<line x1="564.3" y1="204.0" x2="733.3" y2="204.0" stroke="#333" stroke-width="0.9"/>
<text x="558.7" y="206.3" class="tk" textLength="4.3" lengthAdjust="spacingAndGlyphs">0</text>
<text x="556.4" y="184.4" class="tk" textLength="6.6" lengthAdjust="spacingAndGlyphs">10</text>
<text x="556.4" y="162.5" class="tk" textLength="6.6" lengthAdjust="spacingAndGlyphs">20</text>
<text x="556.4" y="140.6" class="tk" textLength="6.6" lengthAdjust="spacingAndGlyphs">30</text>
<text x="556.4" y="118.7" class="tk" textLength="6.6" lengthAdjust="spacingAndGlyphs">40</text>
<text x="556.4" y="96.8" class="tk" textLength="6.6" lengthAdjust="spacingAndGlyphs">50</text>
<text x="565.3" y="213.7" class="tk" textLength="3.9" lengthAdjust="spacingAndGlyphs">0</text>
<text x="585.6" y="213.7" class="tk" textLength="10.8" lengthAdjust="spacingAndGlyphs">500</text>
<text x="607.9" y="213.7" class="tk" textLength="13.7" lengthAdjust="spacingAndGlyphs">1,000</text>
<text x="631.5" y="213.7" class="tk" textLength="13.8" lengthAdjust="spacingAndGlyphs">1,500</text>
<text x="654.9" y="213.7" class="tk" textLength="14.5" lengthAdjust="spacingAndGlyphs">2,000</text>
<text x="678.6" y="213.7" class="tk" textLength="14.5" lengthAdjust="spacingAndGlyphs">2,500</text>
<text x="702.3" y="213.7" class="tk" textLength="14.5" lengthAdjust="spacingAndGlyphs">3,000</text>
<text x="726.0" y="213.7" class="tk" textLength="14.5" lengthAdjust="spacingAndGlyphs">3,500</text>
<text x="616.9" y="221.8" class="al" textLength="66.5" lengthAdjust="spacingAndGlyphs">Wavenumber (cm</text>
<text x="683.7" y="218.6" class="al" style="font-size:3.4px">-1</text>
<text x="687.1" y="221.8" class="al" textLength="2.3" lengthAdjust="spacingAndGlyphs">)</text>
<text transform="translate(552.3,176.8) rotate(-90)" class="al" textLength="55" lengthAdjust="spacingAndGlyphs">Intensity (a.u.)</text>
<clipPath id="cp2"><rect x="567.3" y="94.5" width="166.0" height="109.5"/></clipPath>
<g clip-path="url(#cp2)">
<path d="M582.0,203.6 L583.6,203.5 L586.0,203.4 L588.7,203.2 L591.0,203.1 L593.1,203.1 L595.1,203.0 L596.8,203.0 L598.1,202.9 L598.8,202.9 L599.0,202.9 L599.0,202.9 L599.1,202.7 L599.3,202.2 L599.4,201.5 L599.6,200.9 L599.8,200.7 L599.9,201.1 L599.9,201.8 L600.0,202.6 L600.5,203.1 L601.4,203.3 L602.6,203.3 L603.9,203.2 L605.2,203.1 L606.4,203.2 L607.6,203.2 L608.9,203.2 L610.2,202.9 L611.8,202.3 L613.4,201.6 L615.1,200.6 L616.8,199.6 L618.5,198.6 L620.2,197.4 L621.9,196.1 L623.4,194.6 L624.8,192.9 L626.2,191.1 L627.4,188.9 L628.4,186.5 L629.2,183.6 L629.8,180.5 L630.4,177.0 L630.9,173.1 L631.4,168.1 L631.9,162.1 L632.4,157.0 L632.9,154.5 L633.4,155.7 L633.9,159.4 L634.4,164.1 L635.0,168.1 L635.7,171.4 L636.6,174.9 L637.5,177.8 L638.3,179.5 L639.0,179.9 L639.6,179.3 L640.2,177.8 L640.8,175.5 L641.3,172.0 L641.7,167.3 L642.1,162.4 L642.5,158.2 L642.8,154.4 L643.0,150.6 L643.3,147.9 L643.6,147.5 L643.9,150.0 L644.4,154.7 L644.8,160.6 L645.3,166.6 L645.7,173.1 L646.0,180.5 L646.5,187.5 L647.0,193.1 L647.6,196.6 L648.2,198.8 L648.9,200.2 L650.0,201.4 L651.4,202.3 L653.1,202.7 L654.9,202.8 L656.6,202.9 L657.9,202.9 L659.2,202.7 L660.5,202.4 L662.2,202.2 L664.3,202.1 L666.7,202.0 L669.3,201.9 L671.6,201.8 L673.8,201.7 L675.9,201.5 L678.0,201.4 L680.1,201.2 L682.2,200.9 L684.2,200.6 L686.3,200.3 L688.2,199.8 L690.2,199.3 L692.1,198.6 L693.9,198.0 L695.4,197.4 L696.3,197.1 L696.9,196.8 L697.4,196.6 L698.2,196.6 L699.2,196.7 L700.3,196.9 L701.5,197.2 L702.7,197.2 L703.9,196.9 L705.1,196.3 L706.3,195.7 L707.3,195.5 L708.0,195.7 L708.6,196.2 L709.1,196.9 L709.6,197.4 L710.1,197.9 L710.6,198.3 L711.1,198.6 L711.8,199.0 L712.6,199.3 L713.5,199.6 L714.4,199.8 L715.3,200.1 L716.1,200.3 L717.0,200.5 L717.8,200.7 L718.5,200.9 L719.3,201.2 L720.0,201.6 L720.7,201.9 L721.4,202.2 L722.2,202.6 L723.1,203.0 L724.0,203.3 L725.3,203.6 L727.2,203.7 L729.6,203.8 L731.8,203.8 L733.3,203.8" fill="none" stroke="#f00" stroke-width="1.1" stroke-linejoin="round"/>
</g>
<rect x="642.5" y="97.4" width="27.2" height="11.6" fill="#fff" stroke="#555" stroke-width="0.8"/>
<line x1="645.3" y1="102.8" x2="652.9" y2="102.8" stroke="#f44" stroke-width="1.3"/>
<text x="655.9" y="105.1" class="lg" textLength="11.3" lengthAdjust="spacingAndGlyphs">S22</text>
<line x1="367.3" y1="240.6" x2="536.5" y2="240.6" stroke="#777" stroke-width="0.9"/>
<line x1="536.5" y1="240.6" x2="536.5" y2="350.2" stroke="#aaa" stroke-width="0.9"/>
<line x1="370.3" y1="240.6" x2="370.3" y2="350.2" stroke="#ccc" stroke-width="0.9"/>
<line x1="367.3" y1="350.2" x2="370.3" y2="350.2" stroke="#333" stroke-width="0.8"/>
<line x1="370.1" y1="345.8" x2="371.5" y2="345.8" stroke="#444" stroke-width="0.6"/>
<line x1="370.1" y1="341.4" x2="371.5" y2="341.4" stroke="#444" stroke-width="0.6"/>
<line x1="370.1" y1="337.0" x2="371.5" y2="337.0" stroke="#444" stroke-width="0.6"/>
<line x1="370.1" y1="332.7" x2="371.5" y2="332.7" stroke="#444" stroke-width="0.6"/>
<line x1="367.3" y1="328.3" x2="370.3" y2="328.3" stroke="#333" stroke-width="0.8"/>
<line x1="370.1" y1="323.9" x2="371.5" y2="323.9" stroke="#444" stroke-width="0.6"/>
<line x1="370.1" y1="319.5" x2="371.5" y2="319.5" stroke="#444" stroke-width="0.6"/>
<line x1="370.1" y1="315.1" x2="371.5" y2="315.1" stroke="#444" stroke-width="0.6"/>
<line x1="370.1" y1="310.7" x2="371.5" y2="310.7" stroke="#444" stroke-width="0.6"/>
<line x1="367.3" y1="306.4" x2="370.3" y2="306.4" stroke="#333" stroke-width="0.8"/>
<line x1="370.1" y1="302.0" x2="371.5" y2="302.0" stroke="#444" stroke-width="0.6"/>
<line x1="370.1" y1="297.6" x2="371.5" y2="297.6" stroke="#444" stroke-width="0.6"/>
<line x1="370.1" y1="293.2" x2="371.5" y2="293.2" stroke="#444" stroke-width="0.6"/>
<line x1="370.1" y1="288.8" x2="371.5" y2="288.8" stroke="#444" stroke-width="0.6"/>
<line x1="367.3" y1="284.4" x2="370.3" y2="284.4" stroke="#333" stroke-width="0.8"/>
<line x1="370.1" y1="280.1" x2="371.5" y2="280.1" stroke="#444" stroke-width="0.6"/>
<line x1="370.1" y1="275.7" x2="371.5" y2="275.7" stroke="#444" stroke-width="0.6"/>
<line x1="370.1" y1="271.3" x2="371.5" y2="271.3" stroke="#444" stroke-width="0.6"/>
<line x1="370.1" y1="266.9" x2="371.5" y2="266.9" stroke="#444" stroke-width="0.6"/>
<line x1="367.3" y1="262.5" x2="370.3" y2="262.5" stroke="#333" stroke-width="0.8"/>
<line x1="370.1" y1="258.1" x2="371.5" y2="258.1" stroke="#444" stroke-width="0.6"/>
<line x1="370.1" y1="253.8" x2="371.5" y2="253.8" stroke="#444" stroke-width="0.6"/>
<line x1="370.1" y1="249.4" x2="371.5" y2="249.4" stroke="#444" stroke-width="0.6"/>
<line x1="370.1" y1="245.0" x2="371.5" y2="245.0" stroke="#444" stroke-width="0.6"/>
<line x1="367.3" y1="240.6" x2="370.3" y2="240.6" stroke="#333" stroke-width="0.8"/>
<line x1="370.3" y1="350.2" x2="370.3" y2="352.7" stroke="#555" stroke-width="0.6"/>
<line x1="375.0" y1="350.2" x2="375.0" y2="352.0" stroke="#555" stroke-width="0.6"/>
<line x1="379.8" y1="350.2" x2="379.8" y2="352.0" stroke="#555" stroke-width="0.6"/>
<line x1="384.5" y1="350.2" x2="384.5" y2="352.0" stroke="#555" stroke-width="0.6"/>
<line x1="389.3" y1="350.2" x2="389.3" y2="352.0" stroke="#555" stroke-width="0.6"/>
<line x1="394.0" y1="350.2" x2="394.0" y2="352.7" stroke="#555" stroke-width="0.6"/>
<line x1="398.8" y1="350.2" x2="398.8" y2="352.0" stroke="#555" stroke-width="0.6"/>
<line x1="403.5" y1="350.2" x2="403.5" y2="352.0" stroke="#555" stroke-width="0.6"/>
<line x1="408.3" y1="350.2" x2="408.3" y2="352.0" stroke="#555" stroke-width="0.6"/>
<line x1="413.0" y1="350.2" x2="413.0" y2="352.0" stroke="#555" stroke-width="0.6"/>
<line x1="417.8" y1="350.2" x2="417.8" y2="352.7" stroke="#555" stroke-width="0.6"/>
<line x1="422.5" y1="350.2" x2="422.5" y2="352.0" stroke="#555" stroke-width="0.6"/>
<line x1="427.3" y1="350.2" x2="427.3" y2="352.0" stroke="#555" stroke-width="0.6"/>
<line x1="432.0" y1="350.2" x2="432.0" y2="352.0" stroke="#555" stroke-width="0.6"/>
<line x1="436.8" y1="350.2" x2="436.8" y2="352.0" stroke="#555" stroke-width="0.6"/>
<line x1="441.5" y1="350.2" x2="441.5" y2="352.7" stroke="#555" stroke-width="0.6"/>
<line x1="446.3" y1="350.2" x2="446.3" y2="352.0" stroke="#555" stroke-width="0.6"/>
<line x1="451.0" y1="350.2" x2="451.0" y2="352.0" stroke="#555" stroke-width="0.6"/>
<line x1="455.8" y1="350.2" x2="455.8" y2="352.0" stroke="#555" stroke-width="0.6"/>
<line x1="460.5" y1="350.2" x2="460.5" y2="352.0" stroke="#555" stroke-width="0.6"/>
<line x1="465.3" y1="350.2" x2="465.3" y2="352.7" stroke="#555" stroke-width="0.6"/>
<line x1="470.0" y1="350.2" x2="470.0" y2="352.0" stroke="#555" stroke-width="0.6"/>
<line x1="474.8" y1="350.2" x2="474.8" y2="352.0" stroke="#555" stroke-width="0.6"/>
<line x1="479.5" y1="350.2" x2="479.5" y2="352.0" stroke="#555" stroke-width="0.6"/>
<line x1="484.3" y1="350.2" x2="484.3" y2="352.0" stroke="#555" stroke-width="0.6"/>
<line x1="489.0" y1="350.2" x2="489.0" y2="352.7" stroke="#555" stroke-width="0.6"/>
<line x1="493.8" y1="350.2" x2="493.8" y2="352.0" stroke="#555" stroke-width="0.6"/>
<line x1="498.5" y1="350.2" x2="498.5" y2="352.0" stroke="#555" stroke-width="0.6"/>
<line x1="503.3" y1="350.2" x2="503.3" y2="352.0" stroke="#555" stroke-width="0.6"/>
<line x1="508.0" y1="350.2" x2="508.0" y2="352.0" stroke="#555" stroke-width="0.6"/>
<line x1="512.8" y1="350.2" x2="512.8" y2="352.7" stroke="#555" stroke-width="0.6"/>
<line x1="517.5" y1="350.2" x2="517.5" y2="352.0" stroke="#555" stroke-width="0.6"/>
<line x1="522.3" y1="350.2" x2="522.3" y2="352.0" stroke="#555" stroke-width="0.6"/>
<line x1="527.0" y1="350.2" x2="527.0" y2="352.0" stroke="#555" stroke-width="0.6"/>
<line x1="531.8" y1="350.2" x2="531.8" y2="352.0" stroke="#555" stroke-width="0.6"/>
<line x1="536.5" y1="350.2" x2="536.5" y2="352.7" stroke="#555" stroke-width="0.6"/>
<line x1="367.3" y1="350.2" x2="536.5" y2="350.2" stroke="#333" stroke-width="0.9"/>
<text x="361.7" y="352.5" class="tk" textLength="4.3" lengthAdjust="spacingAndGlyphs">0</text>
<text x="359.4" y="330.6" class="tk" textLength="6.6" lengthAdjust="spacingAndGlyphs">10</text>
<text x="359.4" y="308.7" class="tk" textLength="6.6" lengthAdjust="spacingAndGlyphs">20</text>
<text x="359.4" y="286.7" class="tk" textLength="6.6" lengthAdjust="spacingAndGlyphs">30</text>
<text x="359.4" y="264.8" class="tk" textLength="6.6" lengthAdjust="spacingAndGlyphs">40</text>
<text x="359.4" y="242.9" class="tk" textLength="6.6" lengthAdjust="spacingAndGlyphs">50</text>
<text x="368.4" y="359.9" class="tk" textLength="3.9" lengthAdjust="spacingAndGlyphs">0</text>
<text x="388.6" y="359.9" class="tk" textLength="10.8" lengthAdjust="spacingAndGlyphs">500</text>
<text x="410.9" y="359.9" class="tk" textLength="13.7" lengthAdjust="spacingAndGlyphs">1,000</text>
<text x="434.6" y="359.9" class="tk" textLength="13.8" lengthAdjust="spacingAndGlyphs">1,500</text>
<text x="458.0" y="359.9" class="tk" textLength="14.5" lengthAdjust="spacingAndGlyphs">2,000</text>
<text x="481.8" y="359.9" class="tk" textLength="14.5" lengthAdjust="spacingAndGlyphs">2,500</text>
<text x="505.5" y="359.9" class="tk" textLength="14.5" lengthAdjust="spacingAndGlyphs">3,000</text>
<text x="529.2" y="359.9" class="tk" textLength="14.5" lengthAdjust="spacingAndGlyphs">3,500</text>
<text x="420.0" y="368.0" class="al" textLength="66.5" lengthAdjust="spacingAndGlyphs">Wavenumber (cm</text>
<text x="486.8" y="364.8" class="al" style="font-size:3.4px">-1</text>
<text x="490.2" y="368.0" class="al" textLength="2.3" lengthAdjust="spacingAndGlyphs">)</text>
<text transform="translate(355.3,322.9) rotate(-90)" class="al" textLength="55" lengthAdjust="spacingAndGlyphs">Intensity (a.u.)</text>
<clipPath id="cp3"><rect x="370.3" y="240.6" width="166.2" height="109.6"/></clipPath>
<g clip-path="url(#cp3)">
<path d="M378.2,341.9 L378.5,342.6 L378.9,343.5 L379.5,344.6 L380.0,345.4 L380.7,346.0 L381.5,346.6 L382.2,346.9 L382.7,346.7 L383.0,346.0 L383.1,344.9 L383.2,343.3 L383.2,341.4 L383.3,338.4 L383.4,334.4 L383.5,331.1 L383.6,329.8 L383.7,331.7 L383.8,335.8 L383.9,340.4 L384.0,343.6 L384.0,345.1 L384.0,345.7 L384.2,345.9 L384.5,346.3 L385.3,346.8 L386.3,347.4 L387.4,347.8 L388.5,348.2 L389.6,348.6 L390.8,348.9 L392.0,349.0 L392.8,348.9 L393.3,348.4 L393.4,347.6 L393.5,346.7 L393.6,345.8 L393.7,344.7 L393.8,343.3 L393.8,342.2 L393.9,341.9 L394.0,342.6 L394.1,344.0 L394.2,345.6 L394.3,346.9 L394.4,347.9 L394.4,348.8 L394.6,349.4 L394.9,349.5 L395.5,349.1 L396.3,348.1 L397.1,347.0 L397.8,346.0 L398.2,345.8 L398.5,346.1 L398.7,345.7 L398.9,343.6 L399.1,338.2 L399.3,330.4 L399.4,323.4 L399.5,320.4 L399.6,323.4 L399.7,330.4 L399.8,338.2 L400.0,343.6 L400.2,345.8 L400.5,346.4 L400.8,346.3 L401.2,346.0 L401.6,346.0 L402.1,345.8 L402.6,345.0 L403.0,343.6 L403.2,340.6 L403.3,336.4 L403.3,332.7 L403.4,331.1 L403.5,333.0 L403.5,337.1 L403.6,341.6 L403.8,344.7 L404.1,346.0 L404.6,346.3 L405.0,346.1 L405.4,345.8 L405.9,345.3 L406.3,344.5 L406.7,343.7 L407.0,343.4 L407.2,343.9 L407.4,344.9 L407.6,346.0 L407.8,346.7 L408.2,347.1 L408.7,347.3 L409.3,347.1 L409.7,346.3 L410.0,344.0 L410.3,340.8 L410.6,337.8 L410.8,336.6 L411.0,338.0 L411.1,341.1 L411.3,344.5 L411.6,346.9 L412.1,348.0 L412.7,348.5 L413.3,348.6 L414.1,348.2 L415.1,347.4 L416.3,346.0 L417.4,344.4 L418.3,343.2 L418.9,342.3 L419.2,341.4 L419.5,340.8 L419.7,340.6 L420.0,340.8 L420.2,341.6 L420.4,342.3 L420.6,342.5 L421.1,342.4 L421.6,342.0 L422.1,341.0 L422.5,339.2 L422.9,335.6 L423.2,330.7 L423.5,326.2 L423.7,324.1 L423.9,325.7 L424.1,329.6 L424.2,334.0 L424.4,337.0 L424.7,338.3 L425.1,338.8 L425.5,338.7 L425.8,338.1 L426.1,337.0 L426.3,335.2 L426.5,333.3 L426.8,332.0 L427.2,331.5 L427.7,331.4 L428.2,331.6 L428.7,331.8 L429.0,332.4 L429.2,333.3 L429.4,334.0 L429.7,333.5 L430.1,331.7 L430.6,328.9 L431.1,325.6 L431.6,322.6 L431.9,319.9 L432.3,317.2 L432.6,314.3 L432.9,311.2 L433.3,307.7 L433.6,304.0 L434.0,300.0 L434.4,295.6 L434.8,289.9 L435.3,283.2 L435.8,277.5 L436.3,274.8 L436.7,276.3 L437.0,280.6 L437.4,286.2 L437.7,291.0 L438.0,295.1 L438.3,299.2 L438.6,303.1 L438.9,306.4 L439.2,309.1 L439.5,311.4 L439.8,313.0 L440.2,313.8 L440.6,313.5 L441.1,312.3 L441.6,310.6 L442.0,308.6 L442.3,307.3 L442.6,306.3 L442.8,303.7 L443.0,297.6 L443.1,284.1 L443.1,265.4 L443.2,248.5 L443.2,240.6 L443.3,246.7 L443.3,262.1 L443.3,278.8 L443.4,288.8 L443.6,289.7 L443.8,285.8 L444.1,279.6 L444.4,273.5 L444.8,266.4 L445.2,257.6 L445.6,250.2 L446.0,247.2 L446.4,250.1 L446.7,257.2 L447.0,266.3 L447.2,275.7 L447.4,285.7 L447.5,297.1 L447.7,308.2 L447.9,317.3 L448.3,324.0 L448.8,329.2 L449.3,333.3 L449.9,336.8 L450.6,339.7 L451.4,341.8 L452.4,343.3 L453.5,344.5 L455.0,345.4 L456.6,345.9 L458.5,346.0 L460.7,346.0 L463.3,345.8 L466.2,345.2 L469.3,344.6 L472.0,344.3 L474.3,344.4 L476.3,344.7 L478.3,345.1 L480.3,345.4 L482.5,345.5 L484.7,345.5 L486.9,345.4 L488.8,345.2 L490.4,344.7 L491.8,344.0 L493.1,343.2 L494.5,342.3 L496.1,341.2 L497.8,339.8 L499.4,338.6 L500.8,337.9 L501.8,338.0 L502.6,338.6 L503.3,339.2 L504.3,339.5 L505.5,339.0 L507.0,338.1 L508.5,337.4 L510.0,337.3 L511.4,338.1 L512.9,339.5 L514.3,341.1 L515.7,342.3 L517.1,343.0 L518.5,343.5 L519.9,344.0 L521.3,344.7 L522.7,345.8 L524.1,347.1 L525.5,348.4 L527.0,349.3 L528.8,349.8 L530.8,349.9 L532.6,350.0 L534.1,350.0 L535.1,350.0 L535.8,350.0 L536.2,350.0 L536.5,350.0" fill="none" stroke="#8a8a8a" stroke-width="0.8" stroke-linejoin="round"/>
</g>
<rect x="452" y="242.4" width="25.8" height="10" fill="#fff" stroke="#555" stroke-width="0.8"/>
<line x1="456.2" y1="247.5" x2="462.6" y2="247.5" stroke="#aaa" stroke-width="1"/>
<text x="466.5" y="249.7" class="lg" textLength="8.1" lengthAdjust="spacingAndGlyphs">S21</text>
<line x1="564.5" y1="240.6" x2="733.3" y2="240.6" stroke="#777" stroke-width="0.9"/>
<line x1="733.3" y1="240.6" x2="733.3" y2="350.1" stroke="#aaa" stroke-width="0.9"/>
<line x1="567.5" y1="240.6" x2="567.5" y2="350.1" stroke="#ccc" stroke-width="0.9"/>
<line x1="564.5" y1="350.1" x2="567.5" y2="350.1" stroke="#333" stroke-width="0.8"/>
<line x1="567.3" y1="345.7" x2="568.7" y2="345.7" stroke="#444" stroke-width="0.6"/>
<line x1="567.3" y1="341.3" x2="568.7" y2="341.3" stroke="#444" stroke-width="0.6"/>
<line x1="567.3" y1="337.0" x2="568.7" y2="337.0" stroke="#444" stroke-width="0.6"/>
<line x1="567.3" y1="332.6" x2="568.7" y2="332.6" stroke="#444" stroke-width="0.6"/>
<line x1="564.5" y1="328.2" x2="567.5" y2="328.2" stroke="#333" stroke-width="0.8"/>
<line x1="567.3" y1="323.8" x2="568.7" y2="323.8" stroke="#444" stroke-width="0.6"/>
<line x1="567.3" y1="319.4" x2="568.7" y2="319.4" stroke="#444" stroke-width="0.6"/>
<line x1="567.3" y1="315.1" x2="568.7" y2="315.1" stroke="#444" stroke-width="0.6"/>
<line x1="567.3" y1="310.7" x2="568.7" y2="310.7" stroke="#444" stroke-width="0.6"/>
<line x1="564.5" y1="306.3" x2="567.5" y2="306.3" stroke="#333" stroke-width="0.8"/>
<line x1="567.3" y1="301.9" x2="568.7" y2="301.9" stroke="#444" stroke-width="0.6"/>
<line x1="567.3" y1="297.5" x2="568.7" y2="297.5" stroke="#444" stroke-width="0.6"/>
<line x1="567.3" y1="293.2" x2="568.7" y2="293.2" stroke="#444" stroke-width="0.6"/>
<line x1="567.3" y1="288.8" x2="568.7" y2="288.8" stroke="#444" stroke-width="0.6"/>
<line x1="564.5" y1="284.4" x2="567.5" y2="284.4" stroke="#333" stroke-width="0.8"/>
<line x1="567.3" y1="280.0" x2="568.7" y2="280.0" stroke="#444" stroke-width="0.6"/>
<line x1="567.3" y1="275.6" x2="568.7" y2="275.6" stroke="#444" stroke-width="0.6"/>
<line x1="567.3" y1="271.3" x2="568.7" y2="271.3" stroke="#444" stroke-width="0.6"/>
<line x1="567.3" y1="266.9" x2="568.7" y2="266.9" stroke="#444" stroke-width="0.6"/>
<line x1="564.5" y1="262.5" x2="567.5" y2="262.5" stroke="#333" stroke-width="0.8"/>
<line x1="567.3" y1="258.1" x2="568.7" y2="258.1" stroke="#444" stroke-width="0.6"/>
<line x1="567.3" y1="253.7" x2="568.7" y2="253.7" stroke="#444" stroke-width="0.6"/>
<line x1="567.3" y1="249.4" x2="568.7" y2="249.4" stroke="#444" stroke-width="0.6"/>
<line x1="567.3" y1="245.0" x2="568.7" y2="245.0" stroke="#444" stroke-width="0.6"/>
<line x1="564.5" y1="240.6" x2="567.5" y2="240.6" stroke="#333" stroke-width="0.8"/>
<line x1="567.5" y1="350.1" x2="567.5" y2="352.6" stroke="#555" stroke-width="0.6"/>
<line x1="572.2" y1="350.1" x2="572.2" y2="351.90000000000003" stroke="#555" stroke-width="0.6"/>
<line x1="577.0" y1="350.1" x2="577.0" y2="351.90000000000003" stroke="#555" stroke-width="0.6"/>
<line x1="581.7" y1="350.1" x2="581.7" y2="351.90000000000003" stroke="#555" stroke-width="0.6"/>
<line x1="586.4" y1="350.1" x2="586.4" y2="351.90000000000003" stroke="#555" stroke-width="0.6"/>
<line x1="591.2" y1="350.1" x2="591.2" y2="352.6" stroke="#555" stroke-width="0.6"/>
<line x1="595.9" y1="350.1" x2="595.9" y2="351.90000000000003" stroke="#555" stroke-width="0.6"/>
<line x1="600.7" y1="350.1" x2="600.7" y2="351.90000000000003" stroke="#555" stroke-width="0.6"/>
<line x1="605.4" y1="350.1" x2="605.4" y2="351.90000000000003" stroke="#555" stroke-width="0.6"/>
<line x1="610.1" y1="350.1" x2="610.1" y2="351.90000000000003" stroke="#555" stroke-width="0.6"/>
<line x1="614.9" y1="350.1" x2="614.9" y2="352.6" stroke="#555" stroke-width="0.6"/>
<line x1="619.6" y1="350.1" x2="619.6" y2="351.90000000000003" stroke="#555" stroke-width="0.6"/>
<line x1="624.3" y1="350.1" x2="624.3" y2="351.90000000000003" stroke="#555" stroke-width="0.6"/>
<line x1="629.1" y1="350.1" x2="629.1" y2="351.90000000000003" stroke="#555" stroke-width="0.6"/>
<line x1="633.8" y1="350.1" x2="633.8" y2="351.90000000000003" stroke="#555" stroke-width="0.6"/>
<line x1="638.6" y1="350.1" x2="638.6" y2="352.6" stroke="#555" stroke-width="0.6"/>
<line x1="643.3" y1="350.1" x2="643.3" y2="351.90000000000003" stroke="#555" stroke-width="0.6"/>
<line x1="648.0" y1="350.1" x2="648.0" y2="351.90000000000003" stroke="#555" stroke-width="0.6"/>
<line x1="652.8" y1="350.1" x2="652.8" y2="351.90000000000003" stroke="#555" stroke-width="0.6"/>
<line x1="657.5" y1="350.1" x2="657.5" y2="351.90000000000003" stroke="#555" stroke-width="0.6"/>
<line x1="662.2" y1="350.1" x2="662.2" y2="352.6" stroke="#555" stroke-width="0.6"/>
<line x1="667.0" y1="350.1" x2="667.0" y2="351.90000000000003" stroke="#555" stroke-width="0.6"/>
<line x1="671.7" y1="350.1" x2="671.7" y2="351.90000000000003" stroke="#555" stroke-width="0.6"/>
<line x1="676.5" y1="350.1" x2="676.5" y2="351.90000000000003" stroke="#555" stroke-width="0.6"/>
<line x1="681.2" y1="350.1" x2="681.2" y2="351.90000000000003" stroke="#555" stroke-width="0.6"/>
<line x1="685.9" y1="350.1" x2="685.9" y2="352.6" stroke="#555" stroke-width="0.6"/>
<line x1="690.7" y1="350.1" x2="690.7" y2="351.90000000000003" stroke="#555" stroke-width="0.6"/>
<line x1="695.4" y1="350.1" x2="695.4" y2="351.90000000000003" stroke="#555" stroke-width="0.6"/>
<line x1="700.1" y1="350.1" x2="700.1" y2="351.90000000000003" stroke="#555" stroke-width="0.6"/>
<line x1="704.9" y1="350.1" x2="704.9" y2="351.90000000000003" stroke="#555" stroke-width="0.6"/>
<line x1="709.6" y1="350.1" x2="709.6" y2="352.6" stroke="#555" stroke-width="0.6"/>
<line x1="714.4" y1="350.1" x2="714.4" y2="351.90000000000003" stroke="#555" stroke-width="0.6"/>
<line x1="719.1" y1="350.1" x2="719.1" y2="351.90000000000003" stroke="#555" stroke-width="0.6"/>
<line x1="723.8" y1="350.1" x2="723.8" y2="351.90000000000003" stroke="#555" stroke-width="0.6"/>
<line x1="728.6" y1="350.1" x2="728.6" y2="351.90000000000003" stroke="#555" stroke-width="0.6"/>
<line x1="733.3" y1="350.1" x2="733.3" y2="352.6" stroke="#555" stroke-width="0.6"/>
<line x1="564.5" y1="350.1" x2="733.3" y2="350.1" stroke="#333" stroke-width="0.9"/>
<text x="558.9" y="352.4" class="tk" textLength="4.3" lengthAdjust="spacingAndGlyphs">0</text>
<text x="556.6" y="330.5" class="tk" textLength="6.6" lengthAdjust="spacingAndGlyphs">10</text>
<text x="556.6" y="308.6" class="tk" textLength="6.6" lengthAdjust="spacingAndGlyphs">20</text>
<text x="556.6" y="286.7" class="tk" textLength="6.6" lengthAdjust="spacingAndGlyphs">30</text>
<text x="556.6" y="264.8" class="tk" textLength="6.6" lengthAdjust="spacingAndGlyphs">40</text>
<text x="556.6" y="242.9" class="tk" textLength="6.6" lengthAdjust="spacingAndGlyphs">50</text>
<text x="565.5" y="359.8" class="tk" textLength="3.9" lengthAdjust="spacingAndGlyphs">0</text>
<text x="585.8" y="359.8" class="tk" textLength="10.8" lengthAdjust="spacingAndGlyphs">500</text>
<text x="608.0" y="359.8" class="tk" textLength="13.7" lengthAdjust="spacingAndGlyphs">1,000</text>
<text x="631.7" y="359.8" class="tk" textLength="13.8" lengthAdjust="spacingAndGlyphs">1,500</text>
<text x="655.0" y="359.8" class="tk" textLength="14.5" lengthAdjust="spacingAndGlyphs">2,000</text>
<text x="678.7" y="359.8" class="tk" textLength="14.5" lengthAdjust="spacingAndGlyphs">2,500</text>
<text x="702.4" y="359.8" class="tk" textLength="14.5" lengthAdjust="spacingAndGlyphs">3,000</text>
<text x="726.0" y="359.8" class="tk" textLength="14.5" lengthAdjust="spacingAndGlyphs">3,500</text>
<text x="617.0" y="367.9" class="al" textLength="66.5" lengthAdjust="spacingAndGlyphs">Wavenumber (cm</text>
<text x="683.8" y="364.7" class="al" style="font-size:3.4px">-1</text>
<text x="687.2" y="367.9" class="al" textLength="2.3" lengthAdjust="spacingAndGlyphs">)</text>
<text transform="translate(552.5,322.9) rotate(-90)" class="al" textLength="55" lengthAdjust="spacingAndGlyphs">Intensity (a.u.)</text>
<clipPath id="cp4"><rect x="567.5" y="240.6" width="165.79999999999995" height="109.50000000000003"/></clipPath>
<g clip-path="url(#cp4)">
<path d="M575.4,341.8 L575.7,342.5 L576.1,343.4 L576.6,344.5 L577.2,345.3 L577.9,345.9 L578.6,346.5 L579.4,346.8 L579.9,346.6 L580.2,345.9 L580.3,344.8 L580.3,343.3 L580.4,341.3 L580.5,338.3 L580.6,334.3 L580.7,331.0 L580.8,329.7 L580.9,331.7 L580.9,335.7 L581.0,340.3 L581.1,343.5 L581.2,345.0 L581.2,345.6 L581.3,345.8 L581.7,346.2 L582.4,346.7 L583.4,347.3 L584.6,347.7 L585.6,348.1 L586.8,348.5 L588.0,348.8 L589.1,348.9 L590.0,348.8 L590.4,348.3 L590.6,347.5 L590.6,346.6 L590.7,345.7 L590.8,344.6 L590.9,343.2 L591.0,342.2 L591.0,341.8 L591.1,342.5 L591.2,343.9 L591.3,345.5 L591.4,346.8 L591.5,347.8 L591.6,348.7 L591.7,349.3 L592.0,349.4 L592.6,349.0 L593.5,348.0 L594.3,346.9 L594.9,345.9 L595.3,345.7 L595.6,346.0 L595.9,345.6 L596.1,343.5 L596.2,338.1 L596.4,330.3 L596.5,323.3 L596.6,320.3 L596.7,323.3 L596.8,330.3 L596.9,338.1 L597.1,343.5 L597.3,345.7 L597.6,346.3 L597.9,346.2 L598.3,345.9 L598.7,345.9 L599.2,345.7 L599.7,345.0 L600.1,343.5 L600.3,340.5 L600.4,336.3 L600.4,332.6 L600.5,331.0 L600.6,332.9 L600.7,337.0 L600.8,341.5 L600.9,344.6 L601.3,345.9 L601.7,346.2 L602.1,346.0 L602.6,345.7 L603.0,345.2 L603.4,344.4 L603.8,343.6 L604.1,343.3 L604.3,343.8 L604.5,344.8 L604.7,345.9 L604.9,346.6 L605.3,347.0 L605.9,347.2 L606.4,347.0 L606.8,346.2 L607.2,343.9 L607.4,340.7 L607.7,337.7 L607.9,336.5 L608.1,337.9 L608.2,341.0 L608.4,344.4 L608.7,346.8 L609.2,347.9 L609.8,348.4 L610.4,348.5 L611.2,348.1 L612.2,347.3 L613.4,345.9 L614.5,344.3 L615.4,343.1 L616.0,342.2 L616.3,341.3 L616.6,340.7 L616.8,340.5 L617.1,340.8 L617.2,341.5 L617.4,342.2 L617.7,342.4 L618.1,342.3 L618.6,341.9 L619.2,340.9 L619.6,339.2 L620.0,335.5 L620.3,330.6 L620.5,326.1 L620.8,324.0 L621.0,325.6 L621.1,329.5 L621.3,333.9 L621.5,337.0 L621.8,338.2 L622.2,338.7 L622.5,338.6 L622.9,338.1 L623.1,336.9 L623.3,335.1 L623.6,333.2 L623.9,331.9 L624.3,331.4 L624.8,331.3 L625.3,331.5 L625.7,331.7 L626.0,332.3 L626.2,333.3 L626.5,333.9 L626.8,333.5 L627.2,331.6 L627.7,328.8 L628.2,325.6 L628.6,322.5 L629.0,319.8 L629.3,317.1 L629.6,314.3 L630.0,311.1 L630.3,307.6 L630.7,303.9 L631.0,299.9 L631.4,295.6 L631.9,289.9 L632.3,283.2 L632.8,277.5 L633.3,274.8 L633.7,276.2 L634.1,280.6 L634.4,286.1 L634.8,291.0 L635.1,295.0 L635.4,299.2 L635.7,303.0 L636.0,306.3 L636.3,309.0 L636.6,311.3 L636.9,313.0 L637.2,313.7 L637.7,313.5 L638.2,312.3 L638.6,310.5 L639.0,308.5 L639.3,307.2 L639.6,306.2 L639.8,303.6 L640.0,297.5 L640.1,284.1 L640.2,265.4 L640.2,248.5 L640.3,240.6 L640.3,246.7 L640.3,262.1 L640.4,278.7 L640.5,288.8 L640.6,289.7 L640.8,285.8 L641.1,279.5 L641.4,273.4 L641.8,266.4 L642.2,257.6 L642.7,250.1 L643.1,247.2 L643.4,250.1 L643.7,257.2 L644.0,266.3 L644.2,275.6 L644.4,285.6 L644.5,297.0 L644.7,308.1 L645.0,317.2 L645.3,324.0 L645.8,329.1 L646.3,333.2 L646.9,336.7 L647.6,339.6 L648.4,341.7 L649.4,343.2 L650.5,344.4 L652.0,345.3 L653.6,345.8 L655.5,345.9 L657.6,345.9 L660.2,345.7 L663.2,345.1 L666.2,344.5 L668.9,344.2 L671.2,344.3 L673.3,344.6 L675.2,345.0 L677.3,345.3 L679.4,345.4 L681.7,345.4 L683.8,345.3 L685.7,345.1 L687.3,344.6 L688.7,343.9 L690.0,343.1 L691.4,342.2 L693.0,341.1 L694.7,339.8 L696.3,338.6 L697.7,337.8 L698.7,337.9 L699.4,338.5 L700.2,339.1 L701.1,339.4 L702.4,338.9 L703.9,338.1 L705.4,337.3 L706.9,337.2 L708.3,338.0 L709.7,339.4 L711.1,341.0 L712.6,342.2 L714.0,343.0 L715.3,343.4 L716.7,343.9 L718.1,344.6 L719.5,345.7 L720.9,347.0 L722.3,348.3 L723.8,349.2 L725.6,349.7 L727.6,349.8 L729.5,349.9 L730.9,349.9 L731.9,349.9 L732.6,349.9 L733.0,349.9 L733.3,349.9" fill="none" stroke="#9a9a9a" stroke-width="0.9" stroke-linejoin="round"/>
<path d="M582.1,349.7 L583.8,349.6 L586.2,349.5 L588.8,349.3 L591.2,349.2 L593.2,349.2 L595.2,349.1 L597.0,349.1 L598.3,349.0 L599.0,349.0 L599.2,349.0 L599.2,349.0 L599.2,348.8 L599.4,348.3 L599.6,347.6 L599.8,347.0 L599.9,346.8 L600.0,347.2 L600.1,347.9 L600.2,348.7 L600.7,349.2 L601.6,349.4 L602.8,349.4 L604.1,349.3 L605.4,349.2 L606.6,349.3 L607.8,349.3 L609.0,349.3 L610.4,349.0 L611.9,348.4 L613.6,347.7 L615.3,346.7 L617.0,345.7 L618.6,344.7 L620.3,343.5 L622.0,342.2 L623.5,340.7 L625.0,339.0 L626.3,337.2 L627.5,335.0 L628.5,332.6 L629.3,329.7 L630.0,326.6 L630.5,323.1 L631.0,319.2 L631.6,314.2 L632.0,308.2 L632.5,303.1 L633.0,300.6 L633.5,301.8 L634.0,305.5 L634.5,310.2 L635.1,314.2 L635.9,317.5 L636.7,321.0 L637.6,323.9 L638.4,325.6 L639.1,326.0 L639.7,325.4 L640.3,323.9 L640.9,321.6 L641.4,318.1 L641.8,313.4 L642.2,308.5 L642.6,304.3 L642.9,300.5 L643.1,296.7 L643.4,294.0 L643.7,293.6 L644.1,296.1 L644.5,300.8 L644.9,306.7 L645.4,312.7 L645.8,319.2 L646.2,326.6 L646.6,333.6 L647.1,339.2 L647.7,342.7 L648.3,344.9 L649.0,346.3 L650.1,347.5 L651.5,348.4 L653.2,348.8 L655.0,348.9 L656.7,349.0 L658.0,349.0 L659.3,348.8 L660.6,348.5 L662.2,348.3 L664.4,348.2 L666.8,348.1 L669.3,348.0 L671.7,347.9 L673.9,347.8 L676.0,347.6 L678.1,347.5 L680.1,347.3 L682.2,347.0 L684.3,346.7 L686.3,346.4 L688.3,345.9 L690.2,345.4 L692.2,344.7 L694.0,344.1 L695.4,343.5 L696.4,343.2 L697.0,342.9 L697.5,342.7 L698.2,342.7 L699.2,342.8 L700.3,343.0 L701.5,343.3 L702.7,343.3 L703.9,343.0 L705.1,342.4 L706.3,341.8 L707.3,341.6 L708.0,341.8 L708.6,342.3 L709.1,343.0 L709.6,343.5 L710.1,344.0 L710.6,344.4 L711.2,344.7 L711.8,345.1 L712.6,345.4 L713.5,345.7 L714.4,345.9 L715.3,346.2 L716.1,346.4 L717.0,346.6 L717.8,346.8 L718.6,347.0 L719.3,347.3 L720.0,347.7 L720.7,348.0 L721.5,348.3 L722.3,348.7 L723.1,349.1 L724.1,349.4 L725.3,349.7 L727.2,349.8 L729.6,349.9 L731.8,349.9 L733.3,349.9" fill="none" stroke="#f00" stroke-width="1.1" stroke-linejoin="round"/>
<path d="M614.9,349.7 L615.9,349.3 L617.3,348.7 L618.9,348.0 L620.4,347.3 L621.9,346.5 L623.4,345.7 L624.9,344.8 L626.1,343.7 L627.0,342.7 L627.7,341.6 L628.3,340.3 L628.9,338.7 L629.5,336.6 L630.1,334.1 L630.6,331.4 L631.1,328.9 L631.5,326.1 L631.8,323.1 L632.1,320.6 L632.5,319.4 L633.0,320.1 L633.5,322.0 L634.1,324.5 L634.6,326.7 L635.2,328.6 L635.8,330.7 L636.3,332.6 L636.8,334.1 L637.2,335.2 L637.5,336.0 L637.8,336.5 L638.2,336.5 L638.7,336.1 L639.2,335.4 L639.8,334.2 L640.3,332.6 L640.7,330.4 L641.1,327.7 L641.4,324.8 L641.7,321.6 L642.0,317.7 L642.3,313.0 L642.6,309.1 L642.9,307.4 L643.2,308.5 L643.6,311.5 L643.9,315.7 L644.3,320.1 L644.6,325.2 L644.9,331.2 L645.3,337.0 L645.7,341.6 L646.2,344.4 L646.7,346.2 L647.3,347.4 L648.1,348.3 L649.1,349.1 L650.3,349.4 L651.7,349.6 L653.1,349.7 L654.7,349.7 L656.4,349.7 L658.1,349.6 L659.9,349.4 L661.6,349.3 L663.3,349.2 L665.1,349.0 L667.0,348.8 L669.1,348.6 L671.3,348.4 L673.6,348.1 L676.0,347.9 L678.5,347.7 L681.2,347.5 L683.7,347.3 L685.9,347.0 L687.7,346.8 L689.2,346.5 L690.5,346.2 L691.6,345.7 L692.6,345.2 L693.5,344.6 L694.3,343.9 L694.9,343.1 L695.5,342.1 L695.9,340.8 L696.3,339.8 L696.7,339.4 L697.2,339.9 L697.7,341.1 L698.2,342.5 L698.7,343.5 L699.3,344.1 L699.8,344.5 L700.4,344.8 L701.0,344.8 L701.7,344.7 L702.4,344.4 L703.2,344.0 L703.9,343.7 L704.7,343.5 L705.6,343.3 L706.4,343.1 L707.2,343.1 L707.8,343.3 L708.4,343.6 L709.0,344.0 L709.6,344.4 L710.2,344.9 L710.8,345.4 L711.4,346.0 L712.2,346.4 L713.2,346.6 L714.4,346.8 L715.6,346.9 L716.7,347.0 L717.8,347.2 L718.9,347.3 L719.9,347.5 L720.9,347.7 L721.7,348.0 L722.5,348.3 L723.2,348.7 L723.8,349.0 L724.3,349.2 L724.7,349.4 L725.2,349.5 L726.1,349.7 L727.7,349.8 L729.8,349.8 L731.9,349.9 L733.3,349.9" fill="none" stroke="#111" stroke-width="1.1" stroke-linejoin="round"/>
</g>
<rect x="670.3" y="242.6" width="54" height="28.5" fill="#fff" stroke="#666" stroke-width="0.8"/>
<line x1="673" y1="248.3" x2="680" y2="248.3" stroke="#444" stroke-width="1.2"/>
<line x1="673" y1="256.6" x2="680" y2="256.6" stroke="#f00" stroke-width="1.2"/>
<line x1="673" y1="265.1" x2="680" y2="265.1" stroke="#ccc" stroke-width="1.2"/>
<text x="683.6" y="250.6" class="lg" textLength="37" lengthAdjust="spacingAndGlyphs">rGO - 700°C</text>
<text x="683.6" y="258.9" class="lg" textLength="35.5" lengthAdjust="spacingAndGlyphs">S22 - 700°C</text>
<text x="683.6" y="267.4" class="lg" textLength="35" lengthAdjust="spacingAndGlyphs">S21 - 500°C</text>
</svg>
<div id="tabs" class="a">
<div class="a tab" style="left:1px"><div class="a ic"></div><div class="a tx">09 - /home/...</div>
<div class="a bt" style="left:60.3px"><svg width="7" height="7" style="position:absolute;left:0;top:0"><rect x="2.6" y="1.6" width="2.6" height="2.2" fill="none" stroke="#111" stroke-width="0.9"/><rect x="1.3" y="3.2" width="2.6" height="2.2" fill="none" stroke="#111" stroke-width="0.9"/></svg></div><div class="a bt" style="left:69.9px"><svg width="7" height="7" style="position:absolute;left:0;top:0"><rect x="1.6" y="1.8" width="3.6" height="3.4" fill="none" stroke="#111" stroke-width="0.9"/><rect x="1.6" y="1.6" width="3.6" height="1" fill="#111"/></svg></div><div class="a bt" style="left:79.4px"><svg width="7" height="7" style="position:absolute;left:0;top:0"><path d="M1.5,1.7 l3.8,3.8 M5.3,1.7 l-3.8,3.8" stroke="#111" stroke-width="1.2"/></svg></div></div>
<div class="a tab" style="left:93px"><div class="a ic"></div><div class="a tx">11 - /home/...</div>
<div class="a bt" style="left:60.3px"><svg width="7" height="7" style="position:absolute;left:0;top:0"><rect x="2.6" y="1.6" width="2.6" height="2.2" fill="none" stroke="#111" stroke-width="0.9"/><rect x="1.3" y="3.2" width="2.6" height="2.2" fill="none" stroke="#111" stroke-width="0.9"/></svg></div><div class="a bt" style="left:69.9px"><svg width="7" height="7" style="position:absolute;left:0;top:0"><rect x="1.6" y="1.8" width="3.6" height="3.4" fill="none" stroke="#111" stroke-width="0.9"/><rect x="1.6" y="1.6" width="3.6" height="1" fill="#111"/></svg></div><div class="a bt" style="left:79.4px"><svg width="7" height="7" style="position:absolute;left:0;top:0"><path d="M1.5,1.7 l3.8,3.8 M5.3,1.7 l-3.8,3.8" stroke="#111" stroke-width="1.2"/></svg></div></div>
<div class="a tab" style="left:185px"><div class="a ic"></div><div class="a tx">10 - /home/...</div>
<div class="a bt" style="left:60.3px"><svg width="7" height="7" style="position:absolute;left:0;top:0"><rect x="2.6" y="1.6" width="2.6" height="2.2" fill="none" stroke="#111" stroke-width="0.9"/><rect x="1.3" y="3.2" width="2.6" height="2.2" fill="none" stroke="#111" stroke-width="0.9"/></svg></div><div class="a bt" style="left:69.9px"><svg width="7" height="7" style="position:absolute;left:0;top:0"><rect x="1.6" y="1.8" width="3.6" height="3.4" fill="none" stroke="#111" stroke-width="0.9"/><rect x="1.6" y="1.6" width="3.6" height="1" fill="#111"/></svg></div><div class="a bt" style="left:79.4px"><svg width="7" height="7" style="position:absolute;left:0;top:0"><path d="M1.5,1.7 l3.8,3.8 M5.3,1.7 l-3.8,3.8" stroke="#111" stroke-width="1.2"/></svg></div></div>
<div class="a tab" style="left:277px"><div class="a ic"></div><div class="a tx">12 - /home/...</div>
<div class="a bt" style="left:60.3px"><svg width="7" height="7" style="position:absolute;left:0;top:0"><rect x="2.6" y="1.6" width="2.6" height="2.2" fill="none" stroke="#111" stroke-width="0.9"/><rect x="1.3" y="3.2" width="2.6" height="2.2" fill="none" stroke="#111" stroke-width="0.9"/></svg></div><div class="a bt" style="left:69.9px"><svg width="7" height="7" style="position:absolute;left:0;top:0"><rect x="1.6" y="1.8" width="3.6" height="3.4" fill="none" stroke="#111" stroke-width="0.9"/><rect x="1.6" y="1.6" width="3.6" height="1" fill="#111"/></svg></div><div class="a bt" style="left:79.4px"><svg width="7" height="7" style="position:absolute;left:0;top:0"><path d="M1.5,1.7 l3.8,3.8 M5.3,1.7 l-3.8,3.8" stroke="#111" stroke-width="1.2"/></svg></div></div>
</div>
<div id="status" class="a"><div id="stl" class="a"><div class="a tx">Click on plot or move cursor to display coordinates!</div></div></div>
</body></html>
